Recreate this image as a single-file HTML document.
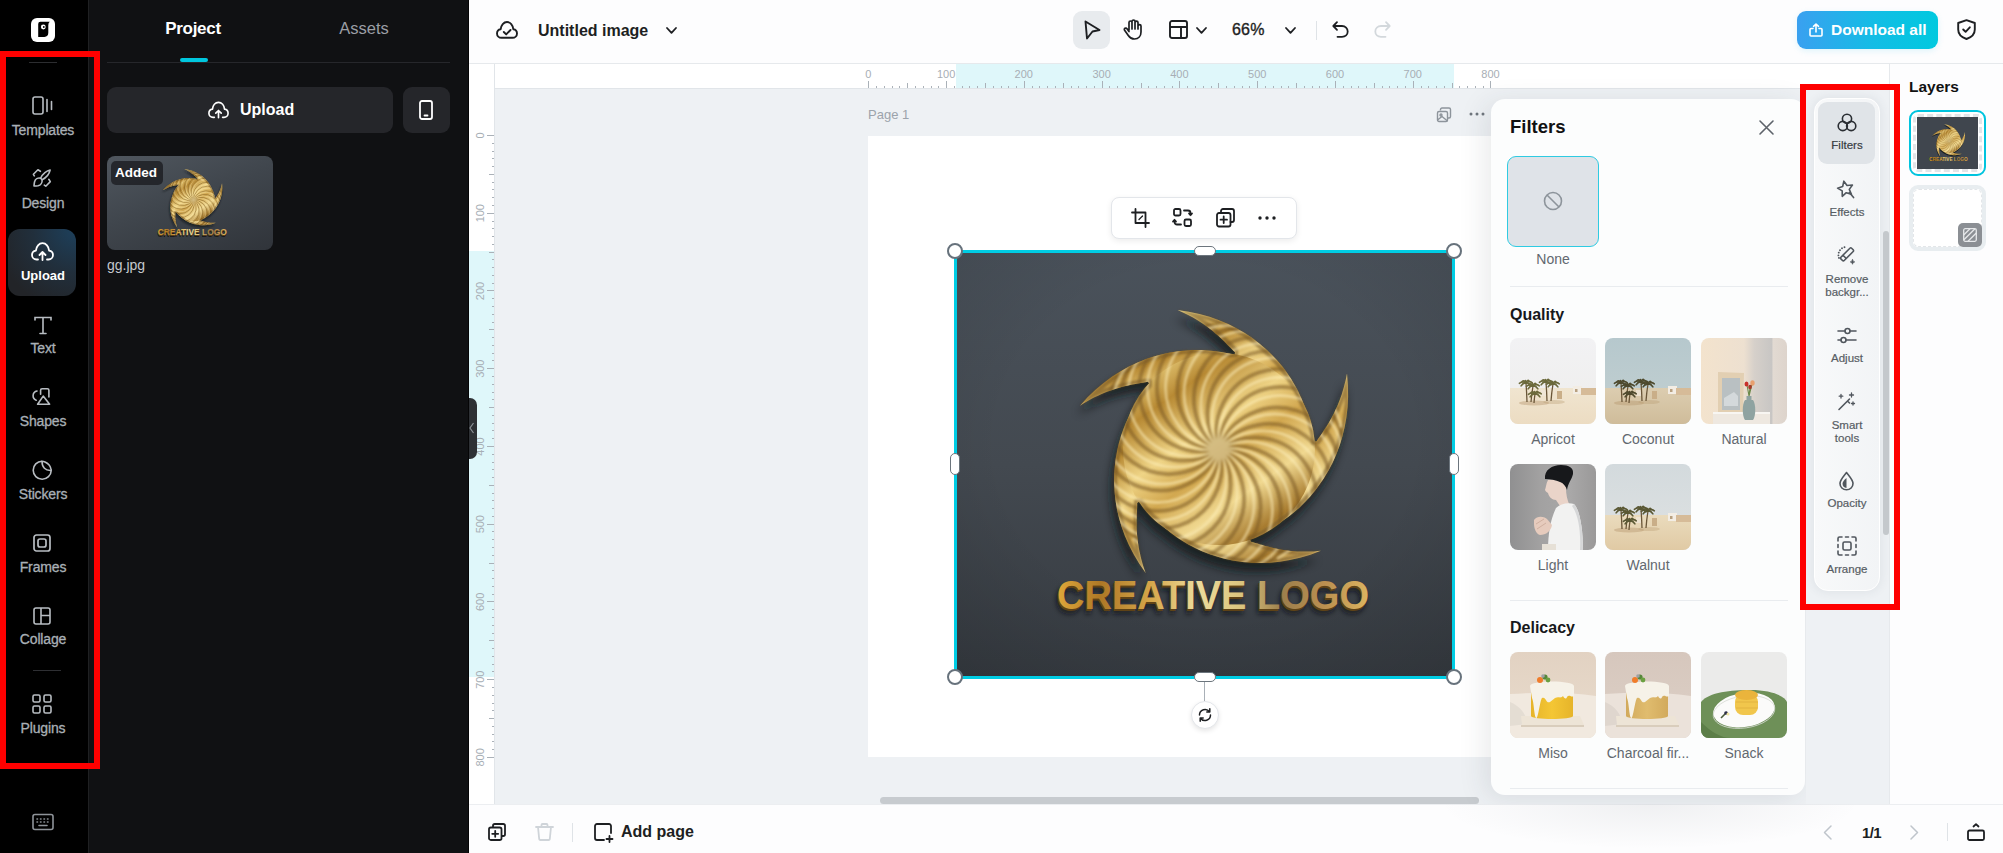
<!DOCTYPE html>
<html><head><meta charset="utf-8">
<style>
*{box-sizing:border-box;margin:0;padding:0}
html,body{width:2003px;height:853px;overflow:hidden;background:#fff;font-family:"Liberation Sans",sans-serif}
.a{position:absolute}
svg{display:block;overflow:visible}
.navl{position:absolute;left:0;width:86px;text-align:center;color:#a9b0b6;font-size:14px;letter-spacing:-0.15px;-webkit-text-stroke:0.3px #a9b0b6;white-space:nowrap}
.tl{position:absolute;text-align:center;white-space:nowrap}
.tile{position:absolute;width:86px;height:86px;border-radius:8px;overflow:hidden}
.tlab{position:absolute;width:96px;text-align:center;font-size:14px;color:#62686f;white-space:nowrap}
.tool{position:absolute;left:1814px;width:66px;text-align:center;font-size:11.5px;color:#575d64;line-height:12.5px;-webkit-text-stroke:0.2px #575d64}
</style></head><body>
<div class="a" style="left:0;top:0;width:2003px;height:853px;overflow:hidden">

<!-- ============ LEFT SIDEBAR ============ -->
<div class="a" style="left:0;top:0;width:88px;height:853px;background:#000"></div>
<div class="a" style="left:88px;top:0;width:1.5px;height:853px;background:#1f2022"></div>
<!-- logo -->
<div class="a" style="left:31px;top:18px;width:24px;height:24px;background:#fff;border-radius:6px"></div>
<svg class="a" style="left:31px;top:18px" width="24" height="24" viewBox="0 0 24 24">
 <path d="M7.2 6 Q7.2 3.8 9.4 3.8 H18.8 Q17.3 4.8 17.3 7.2 V14.8 Q17.3 18.9 13.4 18.9 H7.2 Z" fill="#000"/>
 <circle cx="12.3" cy="9" r="2.4" fill="#fff"/><circle cx="12.8" cy="9" r="0.9" fill="#000"/>
</svg>
<div class="a" style="left:29px;top:62px;width:28px;height:1px;background:#2c2d30"></div>

<!-- nav icons -->
<svg class="a" style="left:32px;top:96px" width="22" height="19" viewBox="0 0 22 19" fill="none" stroke="#b8bdc2" stroke-width="1.6">
 <rect x="1" y="1" width="10" height="17" rx="2"/><path d="M15 3.5v12M19.5 5.5v8" stroke-linecap="round"/>
</svg>
<div class="navl" style="top:122px">Templates</div>

<svg class="a" style="left:33px;top:169px" width="18" height="18" viewBox="0 0 18 18" fill="none" stroke="#b8bdc2" stroke-width="1.6" stroke-linecap="round" stroke-linejoin="round">
 <path d="M1.3 6.9 L0.4 5.3 L4.9 0.8 L7.4 2.3 M15.8 10.3 L17.3 12.6 L12.8 17.2 L11.3 16.1"/>
 <path d="M17.1 1 C14 1.5 9.5 4.5 7.6 9.2 L9.1 10.7 C13.5 8.5 16.5 4 17.1 1 Z"/>
 <path d="M7.6 9.2 C5 8.6 2.2 10 1.5 13 C1.2 14.8 1 16.2 1 17 C1.8 17 3.4 17 5 16.8 C7.8 16.3 9.4 13.6 9.1 10.7"/>
</svg>
<div class="navl" style="top:195px">Design</div>

<div class="a" style="left:8px;top:229px;width:68px;height:67px;border-radius:12px;background:radial-gradient(circle at 100% 0%,#1d405c 0%,#212f3c 45%,#222428 85%)"></div>
<svg class="a" style="left:31px;top:242px" width="23" height="19" viewBox="0 0 23 19" fill="none" stroke="#fff" stroke-width="1.8" stroke-linecap="round" stroke-linejoin="round">
 <path d="M7 17.5 H5.5 C3 17.5 1 15.5 1 13 C1 10.7 2.7 8.9 4.9 8.6 C5.3 4.5 8 1.2 11.5 1.2 C15 1.2 17.7 4.5 18.1 8.6 C20.3 8.9 22 10.7 22 13 C22 15.5 20 17.5 17.5 17.5 H16"/>
 <path d="M11.5 18 V10 M8.5 13 L11.5 10 L14.5 13"/>
</svg>
<div class="navl" style="top:268px;color:#fff;font-weight:bold;font-size:13px;-webkit-text-stroke:0;letter-spacing:0">Upload</div>

<svg class="a" style="left:33px;top:316px" width="20" height="19" viewBox="0 0 20 19" fill="none" stroke="#b8bdc2" stroke-width="1.6" stroke-linecap="round">
 <path d="M2 4 V1.5 H18 V4 M10 1.5 V17.5 M7 17.5 H13"/>
</svg>
<div class="navl" style="top:340px">Text</div>

<svg class="a" style="left:31px;top:387px" width="20" height="20" viewBox="0 0 20 20" fill="none" stroke="#b8bdc2" stroke-width="1.6" stroke-linecap="round" stroke-linejoin="round">
 <path d="M6 4 A4.8 4.8 0 0 0 5.2 13.2"/>
 <path d="M9.6 7.3 V3.2 Q9.6 1.7 11.1 1.7 H16.4 Q17.9 1.7 17.9 3.2 V10"/>
 <path d="M12.2 9.1 L6.6 17.3 H18.6 Z"/>
</svg>
<div class="navl" style="top:413px">Shapes</div>

<svg class="a" style="left:32px;top:460px" width="20" height="21" viewBox="0 0 20 21" fill="none" stroke="#b8bdc2" stroke-width="1.6" stroke-linejoin="round">
 <path d="M10 1.2 A9 9 0 1 0 19.2 10.4"/>
 <path d="M10 1.2 C11 1.3 12 1.6 13 2 C16 3.3 18.3 6 19 9 C19.2 9.5 19.2 10 19.2 10.4 C16.5 10.6 14 9.8 12.4 8.2 C10.8 6.6 10 4 10 1.2 Z"/>
</svg>
<div class="navl" style="top:486px">Stickers</div>

<svg class="a" style="left:33px;top:534px" width="18" height="18" viewBox="0 0 18 18" fill="none" stroke="#b8bdc2" stroke-width="1.7">
 <rect x="1" y="1" width="16" height="16" rx="2.5"/><rect x="5" y="5" width="8" height="8" rx="2"/>
</svg>
<div class="navl" style="top:559px">Frames</div>

<svg class="a" style="left:33px;top:607px" width="18" height="18" viewBox="0 0 18 18" fill="none" stroke="#b8bdc2" stroke-width="1.6">
 <rect x="1" y="1" width="16" height="16" rx="2"/><path d="M8 1 V17 M8 8.5 H17"/>
</svg>
<div class="navl" style="top:631px">Collage</div>
<div class="a" style="left:33px;top:670px;width:28px;height:1px;background:#2e2f33"></div>

<svg class="a" style="left:32px;top:694px" width="20" height="20" viewBox="0 0 20 20" fill="none" stroke="#b8bdc2" stroke-width="1.6">
 <rect x="1" y="1" width="7" height="7" rx="1.5"/><rect x="12" y="1" width="7" height="7" rx="1.5"/>
 <rect x="1" y="12" width="7" height="7" rx="1.5"/><rect x="12" y="12" width="7" height="7" rx="1.5"/>
</svg>
<div class="navl" style="top:720px">Plugins</div>

<svg class="a" style="left:32px;top:813px" width="22" height="18" viewBox="0 0 22 18" fill="none" stroke="#8e9399" stroke-width="1.6" stroke-linecap="round">
 <rect x="1" y="1.5" width="20" height="15" rx="2"/>
 <path d="M5 6h0.5M8.5 6h0.5M12 6h0.5M15.5 6h0.5M5 9h0.5M8.5 9h0.5M12 9h0.5M15.5 9h0.5M7 12.5h8"/>
</svg>


<!-- ============ LEFT PANEL ============ -->
<div class="a" style="left:89px;top:0;width:380px;height:853px;background:#101113"></div>
<div class="a" style="left:468px;top:0;width:1px;height:853px;background:#050506"></div>
<div class="tl" style="left:150px;top:19px;width:86px;color:#fff;font-size:17px;font-weight:bold;letter-spacing:-0.3px">Project</div>
<div class="tl" style="left:320px;top:19px;width:88px;color:#9b9fa5;font-size:16.5px">Assets</div>
<div class="a" style="left:107px;top:62px;width:343px;height:1px;background:#26272b"></div>
<div class="a" style="left:180px;top:58px;width:28px;height:4px;border-radius:2px;background:#00c7de"></div>

<div class="a" style="left:107px;top:87px;width:286px;height:46px;border-radius:9px;background:#25262a"></div>
<svg class="a" style="left:208px;top:101px" width="21" height="18" viewBox="0 0 23 19" fill="none" stroke="#fff" stroke-width="1.8" stroke-linecap="round" stroke-linejoin="round">
 <path d="M7 17.5 H5.5 C3 17.5 1 15.5 1 13 C1 10.7 2.7 8.9 4.9 8.6 C5.3 4.5 8 1.2 11.5 1.2 C15 1.2 17.7 4.5 18.1 8.6 C20.3 8.9 22 10.7 22 13 C22 15.5 20 17.5 17.5 17.5 H16"/>
 <path d="M11.5 18 V10 M8.5 13 L11.5 10 L14.5 13"/>
</svg>
<div class="tl" style="left:240px;top:101px;color:#fff;font-size:16px;font-weight:bold;text-align:left">Upload</div>
<div class="a" style="left:403px;top:87px;width:47px;height:46px;border-radius:9px;background:#25262a"></div>
<svg class="a" style="left:419px;top:100px" width="14" height="20" viewBox="0 0 14 20" fill="none" stroke="#fff" stroke-width="1.8">
 <rect x="1" y="1" width="12" height="18" rx="2"/><path d="M5.5 15.5 H8.5" stroke-linecap="round"/>
</svg>

<!-- thumb -->
<div class="a" style="left:107px;top:156px;width:166px;height:94px;border-radius:8px;overflow:hidden;background:linear-gradient(160deg,#50575f 0%,#40464d 45%,#30343a 100%)"><svg width="166" height="94" style="position:absolute;left:27.5px;top:0"><use href="#logo" width="111" height="94.6"/></svg></div>
<div class="a" style="left:111px;top:161px;width:52px;height:24px;border-radius:5px;background:rgba(30,32,36,0.85)"></div>
<div class="tl" style="left:115px;top:165px;color:#fff;font-size:13.5px;font-weight:bold;text-align:left">Added</div>
<div class="tl" style="left:107px;top:257px;color:#c5c9ce;font-size:14px;text-align:left">gg.jpg</div>

<!-- ============ TOP BAR ============ -->
<div class="a" style="left:469px;top:0;width:1534px;height:63px;background:#fdfdfe"></div>
<div class="a" style="left:469px;top:63px;width:1534px;height:1px;background:#e6e9ec"></div>
<svg class="a" style="left:496px;top:21px" width="22" height="18" viewBox="0 0 22 18" fill="none" stroke="#1d1f22" stroke-width="1.9" stroke-linecap="round" stroke-linejoin="round">
 <path d="M5.5 16.8 C3 16.8 1 14.9 1 12.5 C1 10.3 2.6 8.5 4.7 8.2 C5.1 4.2 7.7 1 11 1 C14.3 1 16.9 4.2 17.3 8.2 C19.4 8.5 21 10.3 21 12.5 C21 14.9 19 16.8 16.5 16.8 Z"/>
 <path d="M7.8 11 L10.2 13.4 L14.5 9"/>
</svg>
<div class="tl" style="left:538px;top:21.5px;color:#1d1f22;font-size:16px;font-weight:bold;text-align:left">Untitled image</div>
<svg class="a" style="left:666px;top:27px" width="11" height="7" viewBox="0 0 11 7" fill="none" stroke="#1d1f22" stroke-width="1.8" stroke-linecap="round" stroke-linejoin="round"><path d="M1 1 L5.5 5.8 L10 1"/></svg>

<!-- center tools -->
<div class="a" style="left:1073px;top:11px;width:37px;height:38px;border-radius:9px;background:#e8ebee"></div>
<svg class="a" style="left:1084px;top:20px" width="17" height="20" viewBox="0 0 17 20" fill="none" stroke="#1d1f22" stroke-width="1.9" stroke-linejoin="round">
 <path d="M1.5 1.5 L15.5 10 L8.5 11.5 L3 18.5 Z"/>
</svg>
<svg class="a" style="left:1123px;top:19px" width="19" height="21" viewBox="0 0 19 21" fill="none" stroke="#1d1f22" stroke-width="1.7" stroke-linecap="round" stroke-linejoin="round">
 <path d="M6 11 V3.5 C6 2.6 6.7 2 7.5 2 C8.3 2 9 2.6 9 3.5 V10 M9 9.5 V2.3 C9 1.5 9.7 1 10.5 1 C11.3 1 12 1.5 12 2.3 V10 M12 10 V3.5 C12 2.7 12.7 2.2 13.5 2.2 C14.3 2.2 15 2.7 15 3.5 V10 M15 7 C15 6.2 15.7 5.7 16.5 5.7 C17.3 5.7 18 6.2 18 7 V13 C18 17 15.5 20 11.5 20 C8.5 20 6.8 18.7 5.3 16.5 L1.6 11.3 C1.1 10.6 1.3 9.7 2 9.3 C2.7 8.9 3.6 9.1 4 9.8 L6 12.5"/>
</svg>
<svg class="a" style="left:1169px;top:20px" width="19" height="19" viewBox="0 0 19 19" fill="none" stroke="#1d1f22" stroke-width="1.9">
 <rect x="1" y="1" width="17" height="17" rx="2"/><path d="M1 7 H18 M12 7 V18"/>
</svg>
<svg class="a" style="left:1196px;top:27px" width="11" height="7" viewBox="0 0 11 7" fill="none" stroke="#1d1f22" stroke-width="1.8" stroke-linecap="round" stroke-linejoin="round"><path d="M1 1 L5.5 5.8 L10 1"/></svg>
<div class="tl" style="left:1232px;top:21px;color:#1d1f22;font-size:16px;text-align:left;letter-spacing:0.2px;-webkit-text-stroke:0.35px #1d1f22">66%</div>
<svg class="a" style="left:1285px;top:27px" width="11" height="7" viewBox="0 0 11 7" fill="none" stroke="#1d1f22" stroke-width="1.8" stroke-linecap="round" stroke-linejoin="round"><path d="M1 1 L5.5 5.8 L10 1"/></svg>
<div class="a" style="left:1316px;top:21px;width:1px;height:19px;background:#dfe3e7"></div>
<svg class="a" style="left:1332px;top:21px" width="17" height="17" viewBox="0 0 17 17" fill="none" stroke="#1d1f22" stroke-width="1.8" stroke-linecap="round" stroke-linejoin="round">
 <path d="M5 1.2 L1.3 5 L5 8.8 M1.5 5 H10 C13.3 5 15.7 7.4 15.7 10.5 C15.7 13.6 13.3 15.8 10 15.8 H5.5"/>
</svg>
<svg class="a" style="left:1374px;top:21px" width="17" height="17" viewBox="0 0 17 17" fill="none" stroke="#d3d8dc" stroke-width="1.8" stroke-linecap="round" stroke-linejoin="round">
 <path d="M12 1.2 L15.7 5 L12 8.8 M15.5 5 H7 C3.7 5 1.3 7.4 1.3 10.5 C1.3 13.6 3.7 15.8 7 15.8 H11.5"/>
</svg>

<!-- download -->
<div class="a" style="left:1797px;top:11px;width:141px;height:38px;border-radius:9px;background:linear-gradient(90deg,#3aa0f0 0%,#13bde5 55%,#00c9df 100%);box-shadow:0 2px 6px rgba(0,180,230,0.12)"></div>
<svg class="a" style="left:1809px;top:23px" width="14" height="14" viewBox="0 0 14 14" fill="none" stroke="#fff" stroke-width="1.6" stroke-linecap="round" stroke-linejoin="round">
 <path d="M4 5.5 H2 C1.4 5.5 1 5.9 1 6.5 V12 C1 12.6 1.4 13 2 13 H12 C12.6 13 13 12.6 13 12 V6.5 C13 5.9 12.6 5.5 12 5.5 H10 M7 9 V1 M4.5 3.3 L7 1 L9.5 3.3"/>
</svg>
<div class="tl" style="left:1831px;top:21px;color:#fff;font-size:15.5px;font-weight:bold;text-align:left">Download all</div>
<svg class="a" style="left:1957px;top:19px" width="19" height="21" viewBox="0 0 19 21" fill="none" stroke="#1d1f22" stroke-width="1.9" stroke-linejoin="round" stroke-linecap="round">
 <path d="M9.5 1.2 L17.8 4 V10.5 C17.8 15 14 18.5 9.5 20 C5 18.5 1.2 15 1.2 10.5 V4 Z"/>
 <path d="M6.2 10.5 L8.6 12.8 L12.8 8.3"/>
</svg>

<!-- ============ CANVAS AREA ============ -->
<div class="a" style="left:469px;top:64px;width:1421px;height:740px;background:#eef1f4"></div>
<!-- rulers -->
<div class="a" style="left:469px;top:64px;width:1421px;height:24px;background:#fff"></div>
<div class="a" style="left:956px;top:64px;width:498px;height:24px;background:#dff7fa"></div>
<div class="a" style="left:469px;top:88px;width:1421px;height:1px;background:#e1e5e9"></div>
<div class="a" style="left:469px;top:64px;width:26px;height:740px;background:#fff"></div>
<div class="a" style="left:469px;top:251px;width:26px;height:426px;background:#dff7fa"></div>
<div class="a" style="left:494px;top:64px;width:1px;height:740px;background:#e1e5e9"></div>
<svg class="a" style="left:0;top:0" width="2003" height="853">
<path d="M868.5 81V88 M876.5 86V88 M884.5 86V88 M892.5 86V88 M899.5 86V88 M907.5 83V88 M915.5 86V88 M923.5 86V88 M931.5 86V88 M938.5 86V88 M946.5 81V88 M954.5 86V88 M962.5 86V88 M969.5 86V88 M977.5 86V88 M985.5 83V88 M993.5 86V88 M1001.5 86V88 M1008.5 86V88 M1016.5 86V88 M1024.5 81V88 M1032.5 86V88 M1039.5 86V88 M1047.5 86V88 M1055.5 86V88 M1063.5 83V88 M1071.5 86V88 M1078.5 86V88 M1086.5 86V88 M1094.5 86V88 M1102.5 81V88 M1109.5 86V88 M1117.5 86V88 M1125.5 86V88 M1133.5 86V88 M1141.5 83V88 M1148.5 86V88 M1156.5 86V88 M1164.5 86V88 M1172.5 86V88 M1179.5 81V88 M1187.5 86V88 M1195.5 86V88 M1203.5 86V88 M1211.5 86V88 M1218.5 83V88 M1226.5 86V88 M1234.5 86V88 M1242.5 86V88 M1249.5 86V88 M1257.5 81V88 M1265.5 86V88 M1273.5 86V88 M1281.5 86V88 M1288.5 86V88 M1296.5 83V88 M1304.5 86V88 M1312.5 86V88 M1319.5 86V88 M1327.5 86V88 M1335.5 81V88 M1343.5 86V88 M1351.5 86V88 M1358.5 86V88 M1366.5 86V88 M1374.5 83V88 M1382.5 86V88 M1389.5 86V88 M1397.5 86V88 M1405.5 86V88 M1413.5 81V88 M1421.5 86V88 M1428.5 86V88 M1436.5 86V88 M1444.5 86V88 M1452.5 83V88 M1459.5 86V88 M1467.5 86V88 M1475.5 86V88 M1483.5 86V88 M1490.5 81V88 M487 135.5H494 M492 143.5H494 M492 151.5H494 M492 158.5H494 M492 166.5H494 M489 174.5H494 M492 182.5H494 M492 189.5H494 M492 197.5H494 M492 205.5H494 M487 213.5H494 M492 221.5H494 M492 228.5H494 M492 236.5H494 M492 244.5H494 M489 252.5H494 M492 259.5H494 M492 267.5H494 M492 275.5H494 M492 283.5H494 M487 290.5H494 M492 298.5H494 M492 306.5H494 M492 314.5H494 M492 322.5H494 M489 329.5H494 M492 337.5H494 M492 345.5H494 M492 353.5H494 M492 360.5H494 M487 368.5H494 M492 376.5H494 M492 384.5H494 M492 392.5H494 M492 399.5H494 M489 407.5H494 M492 415.5H494 M492 423.5H494 M492 430.5H494 M492 438.5H494 M487 446.5H494 M492 454.5H494 M492 462.5H494 M492 469.5H494 M492 477.5H494 M489 485.5H494 M492 493.5H494 M492 500.5H494 M492 508.5H494 M492 516.5H494 M487 524.5H494 M492 531.5H494 M492 539.5H494 M492 547.5H494 M492 555.5H494 M489 563.5H494 M492 570.5H494 M492 578.5H494 M492 586.5H494 M492 594.5H494 M487 601.5H494 M492 609.5H494 M492 617.5H494 M492 625.5H494 M492 633.5H494 M489 640.5H494 M492 648.5H494 M492 656.5H494 M492 664.5H494 M492 671.5H494 M487 679.5H494 M492 687.5H494 M492 695.5H494 M492 703.5H494 M492 710.5H494 M489 718.5H494 M492 726.5H494 M492 734.5H494 M492 741.5H494 M492 749.5H494 M487 757.5H494" stroke="#aab1b8" stroke-width="1" fill="none"/>
<g font-family="Liberation Sans" font-size="11" fill="#a7aeb5"><text x="868.3" y="77.5" text-anchor="middle">0</text><text x="946.1" y="77.5" text-anchor="middle">100</text><text x="1023.8" y="77.5" text-anchor="middle">200</text><text x="1101.6" y="77.5" text-anchor="middle">300</text><text x="1179.4" y="77.5" text-anchor="middle">400</text><text x="1257.2" y="77.5" text-anchor="middle">500</text><text x="1335.0" y="77.5" text-anchor="middle">600</text><text x="1412.7" y="77.5" text-anchor="middle">700</text><text x="1490.5" y="77.5" text-anchor="middle">800</text><text transform="translate(483.5 135.5) rotate(-90)" x="0" y="0" text-anchor="middle">0</text><text transform="translate(483.5 213.2) rotate(-90)" x="0" y="0" text-anchor="middle">100</text><text transform="translate(483.5 291.0) rotate(-90)" x="0" y="0" text-anchor="middle">200</text><text transform="translate(483.5 368.7) rotate(-90)" x="0" y="0" text-anchor="middle">300</text><text transform="translate(483.5 446.5) rotate(-90)" x="0" y="0" text-anchor="middle">400</text><text transform="translate(483.5 524.2) rotate(-90)" x="0" y="0" text-anchor="middle">500</text><text transform="translate(483.5 601.9) rotate(-90)" x="0" y="0" text-anchor="middle">600</text><text transform="translate(483.5 679.7) rotate(-90)" x="0" y="0" text-anchor="middle">700</text><text transform="translate(483.5 757.4) rotate(-90)" x="0" y="0" text-anchor="middle">800</text></g>
</svg>
<div class="a" style="left:469px;top:398px;width:8px;height:61px;border-radius:0 7px 7px 0;background:#2e3135"></div>
<svg class="a" style="left:469px;top:422px" width="6" height="12" viewBox="0 0 6 12" fill="none" stroke="#8c9196" stroke-width="1.2"><path d="M4.5 1 L1 6 L4.5 11"/></svg>

<!-- page -->
<div class="tl" style="left:868px;top:107px;color:#9ca3ab;font-size:13px;text-align:left">Page 1</div>
<svg class="a" style="left:1436px;top:107px" width="16" height="16" viewBox="0 0 16 16" fill="none" stroke="#8d949b" stroke-width="1.4" stroke-linejoin="round">
 <path d="M4.5 3.5 V2.5 C4.5 1.7 5.2 1 6 1 H13 C13.8 1 14.5 1.7 14.5 2.5 V9.5 C14.5 10.3 13.8 11 13 11 H12"/>
 <rect x="1.5" y="4.5" width="10" height="10" rx="1.5"/><circle cx="5" cy="8" r="1"/><path d="M1.5 13 L6 9.5 L11.5 14"/>
</svg>
<svg class="a" style="left:1469px;top:112px" width="16" height="4" viewBox="0 0 16 4" fill="#6f767d"><circle cx="2" cy="2" r="1.5"/><circle cx="8" cy="2" r="1.5"/><circle cx="14" cy="2" r="1.5"/></svg>
<div class="a" style="left:868px;top:136px;width:640px;height:621px;background:#fff"></div>

<!-- image -->
<svg class="a" style="left:0;top:0" width="0" height="0">
<defs>
<linearGradient id="bg" x1="0" y1="0" x2="0" y2="1"><stop offset="0" stop-color="#4a525b"/><stop offset="0.5" stop-color="#434950"/><stop offset="1" stop-color="#363b41"/></linearGradient>
<radialGradient id="vig" cx="0.5" cy="0.45" r="0.75"><stop offset="0.55" stop-color="#000" stop-opacity="0"/><stop offset="1" stop-color="#000" stop-opacity="0.12"/></radialGradient>
<linearGradient id="gold" x1="0.15" y1="0" x2="0.85" y2="1"><stop offset="0" stop-color="#f3dc8c"/><stop offset="0.2" stop-color="#b88a34"/><stop offset="0.4" stop-color="#efd486"/><stop offset="0.55" stop-color="#d2a850"/><stop offset="0.72" stop-color="#f0d890"/><stop offset="0.88" stop-color="#a87c30"/><stop offset="1" stop-color="#e3c274"/></linearGradient>
<linearGradient id="gold2" x1="0" y1="0" x2="1" y2="0"><stop offset="0" stop-color="#dfa83a"/><stop offset="0.14" stop-color="#ae7826"/><stop offset="0.3" stop-color="#d5a64a"/><stop offset="0.45" stop-color="#eddc9c"/><stop offset="0.6" stop-color="#d9c27c"/><stop offset="0.72" stop-color="#9c7e4c"/><stop offset="0.86" stop-color="#bb9050"/><stop offset="1" stop-color="#dcb460"/></linearGradient>
<filter id="sh" x="-20%" y="-20%" width="140%" height="140%"><feGaussianBlur stdDeviation="5"/></filter><filter id="sh2" x="-20%" y="-50%" width="140%" height="200%"><feGaussianBlur stdDeviation="2.5"/></filter>
<filter id="rim" x="-10%" y="-10%" width="120%" height="120%"><feMorphology in="SourceAlpha" operator="erode" radius="3" result="er"/><feComposite in="SourceAlpha" in2="er" operator="out" result="rm"/><feGaussianBlur in="rm" stdDeviation="0.8" result="rb"/><feFlood flood-color="#6e5020" flood-opacity="0.55"/><feComposite in2="rb" operator="in"/></filter>
<clipPath id="clipS"><path transform="translate(263 198)" d="M-41.4,-139.0 L-30.3,-137.3 L-19.6,-135.1 L-9.5,-132.2 L0.1,-128.8 L9.2,-124.9 L17.8,-120.6 L25.8,-115.9 L33.3,-110.9 L40.3,-105.6 L46.8,-100.0 L52.8,-94.3 L58.3,-88.4 L63.4,-82.4 L68.0,-76.2 L72.2,-69.9 L76.0,-63.6 L79.4,-57.2 L82.4,-50.7 L85.1,-44.2 L87.4,-37.6 L89.4,-31.0 L91.1,-24.3 L92.4,-17.6 L93.4,-10.8 L0,0 L16.0,-96.7 L14.4,-98.2 L12.7,-99.9 L11.0,-101.7 L9.2,-103.6 L7.3,-105.5 L5.4,-107.4 L3.5,-109.3 L1.4,-111.3 L-0.7,-113.2 L-2.9,-115.1 L-5.1,-117.0 L-7.5,-118.9 L-9.9,-120.8 L-12.4,-122.7 L-15.0,-124.5 L-17.6,-126.3 L-20.3,-128.0 L-23.1,-129.7 L-26.0,-131.4 L-28.9,-133.0 L-31.9,-134.6 L-35.0,-136.1 L-38.2,-137.6 L-41.4,-139.0Z"/><path transform="translate(263 198)" d="M128.0,-75.4 L128.9,-63.8 L129.1,-52.6 L128.6,-41.8 L127.4,-31.4 L125.6,-21.4 L123.2,-11.9 L120.4,-2.8 L117.1,5.8 L113.5,13.9 L109.5,21.6 L105.2,28.8 L100.6,35.6 L95.8,42.0 L90.8,47.9 L85.6,53.5 L80.3,58.7 L74.8,63.5 L69.2,68.0 L63.4,72.1 L57.6,75.9 L51.6,79.4 L45.5,82.6 L39.3,85.5 L32.9,88.0 L0,0 L97.7,-7.7 L98.8,-9.7 L100.2,-11.7 L101.7,-13.8 L103.2,-16.0 L104.7,-18.3 L106.3,-20.7 L107.8,-23.1 L109.3,-25.6 L110.8,-28.1 L112.3,-30.8 L113.8,-33.5 L115.2,-36.3 L116.5,-39.2 L117.9,-42.1 L119.1,-45.1 L120.4,-48.2 L121.6,-51.4 L122.7,-54.6 L123.7,-57.9 L124.7,-61.3 L125.6,-64.7 L126.5,-68.2 L127.3,-71.8 L128.0,-75.4Z"/><path transform="translate(263 198)" d="M101.8,101.8 L91.4,105.7 L81.0,108.8 L70.8,111.1 L60.8,112.7 L51.0,113.7 L41.5,114.0 L32.3,113.8 L23.3,113.0 L14.7,111.7 L6.4,109.9 L-1.6,107.8 L-9.2,105.3 L-16.5,102.4 L-23.5,99.2 L-30.2,95.7 L-36.5,92.0 L-42.6,88.0 L-48.4,83.8 L-53.8,79.3 L-59.0,74.6 L-63.9,69.8 L-68.6,64.7 L-72.9,59.4 L-77.0,53.9 L0,0 L31.9,92.7 L34.1,93.2 L36.3,93.9 L38.7,94.6 L41.1,95.4 L43.6,96.1 L46.2,96.9 L48.8,97.6 L51.5,98.3 L54.3,99.0 L57.1,99.6 L60.0,100.2 L62.9,100.7 L65.9,101.2 L68.9,101.6 L72.0,101.9 L75.2,102.2 L78.3,102.4 L81.6,102.6 L84.9,102.6 L88.2,102.6 L91.5,102.5 L94.9,102.4 L98.4,102.1 L101.8,101.8Z"/><path transform="translate(263 198)" d="M-73.3,123.9 L-79.7,114.8 L-85.2,105.5 L-90.0,96.2 L-94.1,86.9 L-97.4,77.7 L-100.1,68.5 L-102.2,59.5 L-103.6,50.7 L-104.5,42.0 L-104.9,33.5 L-104.8,25.3 L-104.2,17.3 L-103.3,9.5 L-101.9,1.9 L-100.2,-5.4 L-98.2,-12.5 L-95.8,-19.4 L-93.2,-26.0 L-90.2,-32.4 L-87.0,-38.6 L-83.5,-44.6 L-79.7,-50.3 L-75.7,-55.9 L-71.4,-61.2 L0,0 L-81.8,53.9 L-81.8,56.2 L-81.9,58.5 L-82.0,61.0 L-82.1,63.6 L-82.3,66.2 L-82.3,68.9 L-82.4,71.6 L-82.4,74.4 L-82.4,77.2 L-82.3,80.1 L-82.1,83.0 L-81.9,86.0 L-81.6,89.0 L-81.2,92.0 L-80.8,95.1 L-80.3,98.2 L-79.7,101.4 L-79.0,104.5 L-78.3,107.7 L-77.5,110.9 L-76.6,114.2 L-75.6,117.4 L-74.5,120.7 L-73.3,123.9Z"/><path transform="translate(263 198)" d="M-139.0,-43.3 L-131.4,-51.7 L-123.5,-59.3 L-115.4,-66.1 L-107.1,-72.2 L-98.8,-77.6 L-90.4,-82.2 L-82.0,-86.3 L-73.6,-89.7 L-65.3,-92.5 L-57.0,-94.8 L-48.9,-96.6 L-40.9,-97.8 L-33.1,-98.6 L-25.4,-99.0 L-17.8,-99.0 L-10.4,-98.6 L-3.2,-97.8 L3.9,-96.7 L10.8,-95.3 L17.6,-93.6 L24.2,-91.5 L30.6,-89.2 L37.0,-86.5 L43.1,-83.5 L0,0 L-71.3,-67.2 L-73.5,-66.7 L-75.9,-66.3 L-78.4,-65.9 L-80.9,-65.4 L-83.5,-65.0 L-86.2,-64.5 L-88.9,-63.9 L-91.7,-63.3 L-94.5,-62.7 L-97.4,-61.9 L-100.2,-61.1 L-103.1,-60.3 L-106.1,-59.3 L-109.0,-58.3 L-112.0,-57.2 L-115.0,-56.0 L-117.9,-54.7 L-121.0,-53.3 L-124.0,-51.9 L-127.0,-50.4 L-130.0,-48.7 L-133.0,-47.0 L-136.0,-45.2 L-139.0,-43.3Z"/><circle cx="263" cy="198" r="96"/></clipPath>

</defs><symbol id="logo" viewBox="0 0 498 426">
<g transform="translate(260 207)" fill="#111317" opacity="0.75" filter="url(#sh)"><path d="M-41.4,-139.0 L-30.3,-137.3 L-19.6,-135.1 L-9.5,-132.2 L0.1,-128.8 L9.2,-124.9 L17.8,-120.6 L25.8,-115.9 L33.3,-110.9 L40.3,-105.6 L46.8,-100.0 L52.8,-94.3 L58.3,-88.4 L63.4,-82.4 L68.0,-76.2 L72.2,-69.9 L76.0,-63.6 L79.4,-57.2 L82.4,-50.7 L85.1,-44.2 L87.4,-37.6 L89.4,-31.0 L91.1,-24.3 L92.4,-17.6 L93.4,-10.8 L0,0 L16.0,-96.7 L14.4,-98.2 L12.7,-99.9 L11.0,-101.7 L9.2,-103.6 L7.3,-105.5 L5.4,-107.4 L3.5,-109.3 L1.4,-111.3 L-0.7,-113.2 L-2.9,-115.1 L-5.1,-117.0 L-7.5,-118.9 L-9.9,-120.8 L-12.4,-122.7 L-15.0,-124.5 L-17.6,-126.3 L-20.3,-128.0 L-23.1,-129.7 L-26.0,-131.4 L-28.9,-133.0 L-31.9,-134.6 L-35.0,-136.1 L-38.2,-137.6 L-41.4,-139.0Z"/><path d="M128.0,-75.4 L128.9,-63.8 L129.1,-52.6 L128.6,-41.8 L127.4,-31.4 L125.6,-21.4 L123.2,-11.9 L120.4,-2.8 L117.1,5.8 L113.5,13.9 L109.5,21.6 L105.2,28.8 L100.6,35.6 L95.8,42.0 L90.8,47.9 L85.6,53.5 L80.3,58.7 L74.8,63.5 L69.2,68.0 L63.4,72.1 L57.6,75.9 L51.6,79.4 L45.5,82.6 L39.3,85.5 L32.9,88.0 L0,0 L97.7,-7.7 L98.8,-9.7 L100.2,-11.7 L101.7,-13.8 L103.2,-16.0 L104.7,-18.3 L106.3,-20.7 L107.8,-23.1 L109.3,-25.6 L110.8,-28.1 L112.3,-30.8 L113.8,-33.5 L115.2,-36.3 L116.5,-39.2 L117.9,-42.1 L119.1,-45.1 L120.4,-48.2 L121.6,-51.4 L122.7,-54.6 L123.7,-57.9 L124.7,-61.3 L125.6,-64.7 L126.5,-68.2 L127.3,-71.8 L128.0,-75.4Z"/><path d="M101.8,101.8 L91.4,105.7 L81.0,108.8 L70.8,111.1 L60.8,112.7 L51.0,113.7 L41.5,114.0 L32.3,113.8 L23.3,113.0 L14.7,111.7 L6.4,109.9 L-1.6,107.8 L-9.2,105.3 L-16.5,102.4 L-23.5,99.2 L-30.2,95.7 L-36.5,92.0 L-42.6,88.0 L-48.4,83.8 L-53.8,79.3 L-59.0,74.6 L-63.9,69.8 L-68.6,64.7 L-72.9,59.4 L-77.0,53.9 L0,0 L31.9,92.7 L34.1,93.2 L36.3,93.9 L38.7,94.6 L41.1,95.4 L43.6,96.1 L46.2,96.9 L48.8,97.6 L51.5,98.3 L54.3,99.0 L57.1,99.6 L60.0,100.2 L62.9,100.7 L65.9,101.2 L68.9,101.6 L72.0,101.9 L75.2,102.2 L78.3,102.4 L81.6,102.6 L84.9,102.6 L88.2,102.6 L91.5,102.5 L94.9,102.4 L98.4,102.1 L101.8,101.8Z"/><path d="M-73.3,123.9 L-79.7,114.8 L-85.2,105.5 L-90.0,96.2 L-94.1,86.9 L-97.4,77.7 L-100.1,68.5 L-102.2,59.5 L-103.6,50.7 L-104.5,42.0 L-104.9,33.5 L-104.8,25.3 L-104.2,17.3 L-103.3,9.5 L-101.9,1.9 L-100.2,-5.4 L-98.2,-12.5 L-95.8,-19.4 L-93.2,-26.0 L-90.2,-32.4 L-87.0,-38.6 L-83.5,-44.6 L-79.7,-50.3 L-75.7,-55.9 L-71.4,-61.2 L0,0 L-81.8,53.9 L-81.8,56.2 L-81.9,58.5 L-82.0,61.0 L-82.1,63.6 L-82.3,66.2 L-82.3,68.9 L-82.4,71.6 L-82.4,74.4 L-82.4,77.2 L-82.3,80.1 L-82.1,83.0 L-81.9,86.0 L-81.6,89.0 L-81.2,92.0 L-80.8,95.1 L-80.3,98.2 L-79.7,101.4 L-79.0,104.5 L-78.3,107.7 L-77.5,110.9 L-76.6,114.2 L-75.6,117.4 L-74.5,120.7 L-73.3,123.9Z"/><path d="M-139.0,-43.3 L-131.4,-51.7 L-123.5,-59.3 L-115.4,-66.1 L-107.1,-72.2 L-98.8,-77.6 L-90.4,-82.2 L-82.0,-86.3 L-73.6,-89.7 L-65.3,-92.5 L-57.0,-94.8 L-48.9,-96.6 L-40.9,-97.8 L-33.1,-98.6 L-25.4,-99.0 L-17.8,-99.0 L-10.4,-98.6 L-3.2,-97.8 L3.9,-96.7 L10.8,-95.3 L17.6,-93.6 L24.2,-91.5 L30.6,-89.2 L37.0,-86.5 L43.1,-83.5 L0,0 L-71.3,-67.2 L-73.5,-66.7 L-75.9,-66.3 L-78.4,-65.9 L-80.9,-65.4 L-83.5,-65.0 L-86.2,-64.5 L-88.9,-63.9 L-91.7,-63.3 L-94.5,-62.7 L-97.4,-61.9 L-100.2,-61.1 L-103.1,-60.3 L-106.1,-59.3 L-109.0,-58.3 L-112.0,-57.2 L-115.0,-56.0 L-117.9,-54.7 L-121.0,-53.3 L-124.0,-51.9 L-127.0,-50.4 L-130.0,-48.7 L-133.0,-47.0 L-136.0,-45.2 L-139.0,-43.3Z"/><circle r="96"/></g>
<g transform="translate(263 198)" fill="url(#gold)"><path d="M-41.4,-139.0 L-30.3,-137.3 L-19.6,-135.1 L-9.5,-132.2 L0.1,-128.8 L9.2,-124.9 L17.8,-120.6 L25.8,-115.9 L33.3,-110.9 L40.3,-105.6 L46.8,-100.0 L52.8,-94.3 L58.3,-88.4 L63.4,-82.4 L68.0,-76.2 L72.2,-69.9 L76.0,-63.6 L79.4,-57.2 L82.4,-50.7 L85.1,-44.2 L87.4,-37.6 L89.4,-31.0 L91.1,-24.3 L92.4,-17.6 L93.4,-10.8 L0,0 L16.0,-96.7 L14.4,-98.2 L12.7,-99.9 L11.0,-101.7 L9.2,-103.6 L7.3,-105.5 L5.4,-107.4 L3.5,-109.3 L1.4,-111.3 L-0.7,-113.2 L-2.9,-115.1 L-5.1,-117.0 L-7.5,-118.9 L-9.9,-120.8 L-12.4,-122.7 L-15.0,-124.5 L-17.6,-126.3 L-20.3,-128.0 L-23.1,-129.7 L-26.0,-131.4 L-28.9,-133.0 L-31.9,-134.6 L-35.0,-136.1 L-38.2,-137.6 L-41.4,-139.0Z"/><path d="M128.0,-75.4 L128.9,-63.8 L129.1,-52.6 L128.6,-41.8 L127.4,-31.4 L125.6,-21.4 L123.2,-11.9 L120.4,-2.8 L117.1,5.8 L113.5,13.9 L109.5,21.6 L105.2,28.8 L100.6,35.6 L95.8,42.0 L90.8,47.9 L85.6,53.5 L80.3,58.7 L74.8,63.5 L69.2,68.0 L63.4,72.1 L57.6,75.9 L51.6,79.4 L45.5,82.6 L39.3,85.5 L32.9,88.0 L0,0 L97.7,-7.7 L98.8,-9.7 L100.2,-11.7 L101.7,-13.8 L103.2,-16.0 L104.7,-18.3 L106.3,-20.7 L107.8,-23.1 L109.3,-25.6 L110.8,-28.1 L112.3,-30.8 L113.8,-33.5 L115.2,-36.3 L116.5,-39.2 L117.9,-42.1 L119.1,-45.1 L120.4,-48.2 L121.6,-51.4 L122.7,-54.6 L123.7,-57.9 L124.7,-61.3 L125.6,-64.7 L126.5,-68.2 L127.3,-71.8 L128.0,-75.4Z"/><path d="M101.8,101.8 L91.4,105.7 L81.0,108.8 L70.8,111.1 L60.8,112.7 L51.0,113.7 L41.5,114.0 L32.3,113.8 L23.3,113.0 L14.7,111.7 L6.4,109.9 L-1.6,107.8 L-9.2,105.3 L-16.5,102.4 L-23.5,99.2 L-30.2,95.7 L-36.5,92.0 L-42.6,88.0 L-48.4,83.8 L-53.8,79.3 L-59.0,74.6 L-63.9,69.8 L-68.6,64.7 L-72.9,59.4 L-77.0,53.9 L0,0 L31.9,92.7 L34.1,93.2 L36.3,93.9 L38.7,94.6 L41.1,95.4 L43.6,96.1 L46.2,96.9 L48.8,97.6 L51.5,98.3 L54.3,99.0 L57.1,99.6 L60.0,100.2 L62.9,100.7 L65.9,101.2 L68.9,101.6 L72.0,101.9 L75.2,102.2 L78.3,102.4 L81.6,102.6 L84.9,102.6 L88.2,102.6 L91.5,102.5 L94.9,102.4 L98.4,102.1 L101.8,101.8Z"/><path d="M-73.3,123.9 L-79.7,114.8 L-85.2,105.5 L-90.0,96.2 L-94.1,86.9 L-97.4,77.7 L-100.1,68.5 L-102.2,59.5 L-103.6,50.7 L-104.5,42.0 L-104.9,33.5 L-104.8,25.3 L-104.2,17.3 L-103.3,9.5 L-101.9,1.9 L-100.2,-5.4 L-98.2,-12.5 L-95.8,-19.4 L-93.2,-26.0 L-90.2,-32.4 L-87.0,-38.6 L-83.5,-44.6 L-79.7,-50.3 L-75.7,-55.9 L-71.4,-61.2 L0,0 L-81.8,53.9 L-81.8,56.2 L-81.9,58.5 L-82.0,61.0 L-82.1,63.6 L-82.3,66.2 L-82.3,68.9 L-82.4,71.6 L-82.4,74.4 L-82.4,77.2 L-82.3,80.1 L-82.1,83.0 L-81.9,86.0 L-81.6,89.0 L-81.2,92.0 L-80.8,95.1 L-80.3,98.2 L-79.7,101.4 L-79.0,104.5 L-78.3,107.7 L-77.5,110.9 L-76.6,114.2 L-75.6,117.4 L-74.5,120.7 L-73.3,123.9Z"/><path d="M-139.0,-43.3 L-131.4,-51.7 L-123.5,-59.3 L-115.4,-66.1 L-107.1,-72.2 L-98.8,-77.6 L-90.4,-82.2 L-82.0,-86.3 L-73.6,-89.7 L-65.3,-92.5 L-57.0,-94.8 L-48.9,-96.6 L-40.9,-97.8 L-33.1,-98.6 L-25.4,-99.0 L-17.8,-99.0 L-10.4,-98.6 L-3.2,-97.8 L3.9,-96.7 L10.8,-95.3 L17.6,-93.6 L24.2,-91.5 L30.6,-89.2 L37.0,-86.5 L43.1,-83.5 L0,0 L-71.3,-67.2 L-73.5,-66.7 L-75.9,-66.3 L-78.4,-65.9 L-80.9,-65.4 L-83.5,-65.0 L-86.2,-64.5 L-88.9,-63.9 L-91.7,-63.3 L-94.5,-62.7 L-97.4,-61.9 L-100.2,-61.1 L-103.1,-60.3 L-106.1,-59.3 L-109.0,-58.3 L-112.0,-57.2 L-115.0,-56.0 L-117.9,-54.7 L-121.0,-53.3 L-124.0,-51.9 L-127.0,-50.4 L-130.0,-48.7 L-133.0,-47.0 L-136.0,-45.2 L-139.0,-43.3Z"/><circle r="96"/></g>
<g filter="url(#rim)"><g transform="translate(263 198)" fill="#000"><path d="M-41.4,-139.0 L-30.3,-137.3 L-19.6,-135.1 L-9.5,-132.2 L0.1,-128.8 L9.2,-124.9 L17.8,-120.6 L25.8,-115.9 L33.3,-110.9 L40.3,-105.6 L46.8,-100.0 L52.8,-94.3 L58.3,-88.4 L63.4,-82.4 L68.0,-76.2 L72.2,-69.9 L76.0,-63.6 L79.4,-57.2 L82.4,-50.7 L85.1,-44.2 L87.4,-37.6 L89.4,-31.0 L91.1,-24.3 L92.4,-17.6 L93.4,-10.8 L0,0 L16.0,-96.7 L14.4,-98.2 L12.7,-99.9 L11.0,-101.7 L9.2,-103.6 L7.3,-105.5 L5.4,-107.4 L3.5,-109.3 L1.4,-111.3 L-0.7,-113.2 L-2.9,-115.1 L-5.1,-117.0 L-7.5,-118.9 L-9.9,-120.8 L-12.4,-122.7 L-15.0,-124.5 L-17.6,-126.3 L-20.3,-128.0 L-23.1,-129.7 L-26.0,-131.4 L-28.9,-133.0 L-31.9,-134.6 L-35.0,-136.1 L-38.2,-137.6 L-41.4,-139.0Z"/><path d="M128.0,-75.4 L128.9,-63.8 L129.1,-52.6 L128.6,-41.8 L127.4,-31.4 L125.6,-21.4 L123.2,-11.9 L120.4,-2.8 L117.1,5.8 L113.5,13.9 L109.5,21.6 L105.2,28.8 L100.6,35.6 L95.8,42.0 L90.8,47.9 L85.6,53.5 L80.3,58.7 L74.8,63.5 L69.2,68.0 L63.4,72.1 L57.6,75.9 L51.6,79.4 L45.5,82.6 L39.3,85.5 L32.9,88.0 L0,0 L97.7,-7.7 L98.8,-9.7 L100.2,-11.7 L101.7,-13.8 L103.2,-16.0 L104.7,-18.3 L106.3,-20.7 L107.8,-23.1 L109.3,-25.6 L110.8,-28.1 L112.3,-30.8 L113.8,-33.5 L115.2,-36.3 L116.5,-39.2 L117.9,-42.1 L119.1,-45.1 L120.4,-48.2 L121.6,-51.4 L122.7,-54.6 L123.7,-57.9 L124.7,-61.3 L125.6,-64.7 L126.5,-68.2 L127.3,-71.8 L128.0,-75.4Z"/><path d="M101.8,101.8 L91.4,105.7 L81.0,108.8 L70.8,111.1 L60.8,112.7 L51.0,113.7 L41.5,114.0 L32.3,113.8 L23.3,113.0 L14.7,111.7 L6.4,109.9 L-1.6,107.8 L-9.2,105.3 L-16.5,102.4 L-23.5,99.2 L-30.2,95.7 L-36.5,92.0 L-42.6,88.0 L-48.4,83.8 L-53.8,79.3 L-59.0,74.6 L-63.9,69.8 L-68.6,64.7 L-72.9,59.4 L-77.0,53.9 L0,0 L31.9,92.7 L34.1,93.2 L36.3,93.9 L38.7,94.6 L41.1,95.4 L43.6,96.1 L46.2,96.9 L48.8,97.6 L51.5,98.3 L54.3,99.0 L57.1,99.6 L60.0,100.2 L62.9,100.7 L65.9,101.2 L68.9,101.6 L72.0,101.9 L75.2,102.2 L78.3,102.4 L81.6,102.6 L84.9,102.6 L88.2,102.6 L91.5,102.5 L94.9,102.4 L98.4,102.1 L101.8,101.8Z"/><path d="M-73.3,123.9 L-79.7,114.8 L-85.2,105.5 L-90.0,96.2 L-94.1,86.9 L-97.4,77.7 L-100.1,68.5 L-102.2,59.5 L-103.6,50.7 L-104.5,42.0 L-104.9,33.5 L-104.8,25.3 L-104.2,17.3 L-103.3,9.5 L-101.9,1.9 L-100.2,-5.4 L-98.2,-12.5 L-95.8,-19.4 L-93.2,-26.0 L-90.2,-32.4 L-87.0,-38.6 L-83.5,-44.6 L-79.7,-50.3 L-75.7,-55.9 L-71.4,-61.2 L0,0 L-81.8,53.9 L-81.8,56.2 L-81.9,58.5 L-82.0,61.0 L-82.1,63.6 L-82.3,66.2 L-82.3,68.9 L-82.4,71.6 L-82.4,74.4 L-82.4,77.2 L-82.3,80.1 L-82.1,83.0 L-81.9,86.0 L-81.6,89.0 L-81.2,92.0 L-80.8,95.1 L-80.3,98.2 L-79.7,101.4 L-79.0,104.5 L-78.3,107.7 L-77.5,110.9 L-76.6,114.2 L-75.6,117.4 L-74.5,120.7 L-73.3,123.9Z"/><path d="M-139.0,-43.3 L-131.4,-51.7 L-123.5,-59.3 L-115.4,-66.1 L-107.1,-72.2 L-98.8,-77.6 L-90.4,-82.2 L-82.0,-86.3 L-73.6,-89.7 L-65.3,-92.5 L-57.0,-94.8 L-48.9,-96.6 L-40.9,-97.8 L-33.1,-98.6 L-25.4,-99.0 L-17.8,-99.0 L-10.4,-98.6 L-3.2,-97.8 L3.9,-96.7 L10.8,-95.3 L17.6,-93.6 L24.2,-91.5 L30.6,-89.2 L37.0,-86.5 L43.1,-83.5 L0,0 L-71.3,-67.2 L-73.5,-66.7 L-75.9,-66.3 L-78.4,-65.9 L-80.9,-65.4 L-83.5,-65.0 L-86.2,-64.5 L-88.9,-63.9 L-91.7,-63.3 L-94.5,-62.7 L-97.4,-61.9 L-100.2,-61.1 L-103.1,-60.3 L-106.1,-59.3 L-109.0,-58.3 L-112.0,-57.2 L-115.0,-56.0 L-117.9,-54.7 L-121.0,-53.3 L-124.0,-51.9 L-127.0,-50.4 L-130.0,-48.7 L-133.0,-47.0 L-136.0,-45.2 L-139.0,-43.3Z"/><circle r="96"/></g></g>
<filter id="bl1" x="-10%" y="-10%" width="120%" height="120%"><feGaussianBlur stdDeviation="1.3"/></filter>
<g clip-path="url(#clipS)"><g transform="translate(263 198)" fill="none"><path d="M0,0 A62 62 0 0 1 124.0,0.0 M0,0 A62 62 0 0 1 117.9,38.3 M0,0 A62 62 0 0 1 100.3,72.9 M0,0 A62 62 0 0 1 72.9,100.3 M0,0 A62 62 0 0 1 38.3,117.9 M0,0 A62 62 0 0 1 0.0,124.0 M0,0 A62 62 0 0 1 -38.3,117.9 M0,0 A62 62 0 0 1 -72.9,100.3 M0,0 A62 62 0 0 1 -100.3,72.9 M0,0 A62 62 0 0 1 -117.9,38.3 M0,0 A62 62 0 0 1 -124.0,0.0 M0,0 A62 62 0 0 1 -117.9,-38.3 M0,0 A62 62 0 0 1 -100.3,-72.9 M0,0 A62 62 0 0 1 -72.9,-100.3 M0,0 A62 62 0 0 1 -38.3,-117.9 M0,0 A62 62 0 0 1 -0.0,-124.0 M0,0 A62 62 0 0 1 38.3,-117.9 M0,0 A62 62 0 0 1 72.9,-100.3 M0,0 A62 62 0 0 1 100.3,-72.9 M0,0 A62 62 0 0 1 117.9,-38.3" stroke="#7a5820" stroke-width="4" opacity="0.55" filter="url(#bl1)"/><path d="M0,0 A62 62 0 0 1 122.8,17.3 M0,0 A62 62 0 0 1 111.5,54.4 M0,0 A62 62 0 0 1 89.2,86.1 M0,0 A62 62 0 0 1 58.2,109.5 M0,0 A62 62 0 0 1 21.5,122.1 M0,0 A62 62 0 0 1 -17.3,122.8 M0,0 A62 62 0 0 1 -54.4,111.5 M0,0 A62 62 0 0 1 -86.1,89.2 M0,0 A62 62 0 0 1 -109.5,58.2 M0,0 A62 62 0 0 1 -122.1,21.5 M0,0 A62 62 0 0 1 -122.8,-17.3 M0,0 A62 62 0 0 1 -111.5,-54.4 M0,0 A62 62 0 0 1 -89.2,-86.1 M0,0 A62 62 0 0 1 -58.2,-109.5 M0,0 A62 62 0 0 1 -21.5,-122.1 M0,0 A62 62 0 0 1 17.3,-122.8 M0,0 A62 62 0 0 1 54.4,-111.5 M0,0 A62 62 0 0 1 86.1,-89.2 M0,0 A62 62 0 0 1 109.5,-58.2 M0,0 A62 62 0 0 1 122.1,-21.5" stroke="#fff2bf" stroke-width="3" opacity="0.5" filter="url(#bl1)"/></g></g>
<text x="255" y="363" font-family="Liberation Sans" font-weight="bold" font-size="41" fill="#0e1013" opacity="0.75" text-anchor="middle" textLength="312" lengthAdjust="spacingAndGlyphs" filter="url(#sh2)">CREATIVE LOGO</text>
<text x="256" y="359.5" font-family="Liberation Sans" font-weight="bold" font-size="41" fill="#5e4216" text-anchor="middle" textLength="312" lengthAdjust="spacingAndGlyphs">CREATIVE LOGO</text>
<text x="257" y="358" font-family="Liberation Sans" font-weight="bold" font-size="41" fill="url(#gold2)" text-anchor="middle" textLength="312" lengthAdjust="spacingAndGlyphs">CREATIVE LOGO</text>
</symbol></svg>
<svg class="a" style="left:956px;top:251px" width="498" height="426"><rect width="498" height="426" fill="url(#bg)"/><rect width="498" height="426" fill="url(#vig)"/><use href="#logo" width="498" height="426"/></svg>
<div class="a" style="left:954px;top:249.5px;width:501px;height:429px;border:3px solid #00cde4"></div>

<!-- toolbar -->
<div class="a" style="left:1111px;top:197px;width:186px;height:42px;border-radius:8px;background:#fff;border:1px solid #e3e6ea;box-shadow:0 2px 6px rgba(0,0,0,0.08)"></div>
<svg class="a" style="left:1131px;top:208px" width="19" height="20" viewBox="0 0 19 20" fill="none" stroke="#1d1f22" stroke-width="1.8" stroke-linecap="round" stroke-linejoin="round">
 <path d="M4.5 1 V15 H18 M1 4.5 H14.5 V19"/><path d="M8 11.5 L11.5 8" stroke-width="1.3"/>
</svg>
<svg class="a" style="left:1173px;top:208px" width="19" height="19" viewBox="0 0 19 19" fill="none" stroke="#1d1f22" stroke-width="1.8" stroke-linecap="round" stroke-linejoin="round">
 <rect x="1" y="1" width="6.5" height="6.5" rx="1.5"/><rect x="11.5" y="11.5" width="6.5" height="6.5" rx="1.5"/>
 <path d="M11 2.5 H15 C16.4 2.5 17.5 3.6 17.5 5 V7 M16 5.5 L17.5 7.2 L19 5.5 M8 16.5 H4 C2.6 16.5 1.5 15.4 1.5 14 V12 M3 13.5 L1.5 11.8 L0 13.5"/>
</svg>
<svg class="a" style="left:1216px;top:208px" width="19" height="19" viewBox="0 0 19 19" fill="none" stroke="#1d1f22" stroke-width="1.8" stroke-linecap="round" stroke-linejoin="round">
 <path d="M5 4.5 V3 C5 1.9 5.9 1 7 1 H16 C17.1 1 18 1.9 18 3 V12 C18 13.1 17.1 14 16 14 H14.5"/>
 <rect x="1" y="5" width="13.5" height="13.5" rx="2"/><path d="M7.7 8.5 V15 M4.5 11.7 H11"/>
</svg>
<svg class="a" style="left:1258px;top:216px" width="18" height="4" viewBox="0 0 18 4" fill="#1d1f22"><circle cx="2" cy="2" r="1.7"/><circle cx="9" cy="2" r="1.7"/><circle cx="16" cy="2" r="1.7"/></svg>

<!-- handles -->
<div class="a" style="left:947px;top:243px;width:16px;height:16px;border-radius:50%;background:#fff;border:2px solid #67727c"></div>
<div class="a" style="left:1446px;top:243px;width:16px;height:16px;border-radius:50%;background:#fff;border:2px solid #67727c"></div>
<div class="a" style="left:947px;top:669px;width:16px;height:16px;border-radius:50%;background:#fff;border:2px solid #67727c"></div>
<div class="a" style="left:1446px;top:669px;width:16px;height:16px;border-radius:50%;background:#fff;border:2px solid #67727c"></div>
<div class="a" style="left:1194px;top:246px;width:22px;height:10px;border-radius:5px;background:#fff;border:1.5px solid #6c757d"></div>
<div class="a" style="left:1194px;top:672px;width:22px;height:10px;border-radius:5px;background:#fff;border:1.5px solid #6c757d"></div>
<div class="a" style="left:950px;top:453px;width:10px;height:22px;border-radius:5px;background:#fff;border:1.5px solid #6c757d"></div>
<div class="a" style="left:1449px;top:453px;width:10px;height:22px;border-radius:5px;background:#fff;border:1.5px solid #6c757d"></div>
<div class="a" style="left:1204px;top:682px;width:1px;height:19px;background:#a9b0b7"></div>
<div class="a" style="left:1191px;top:701px;width:28px;height:28px;border-radius:50%;background:#fff;border:1px solid #e3e6ea;box-shadow:0 2px 5px rgba(0,0,0,0.1)"></div>
<svg class="a" style="left:1197px;top:707px" width="16" height="16" viewBox="0 0 16 16" fill="none" stroke="#1d1f22" stroke-width="1.5" stroke-linecap="round" stroke-linejoin="round">
 <path d="M2.5 8 A5.5 5.5 0 0 1 12.5 4.8 M13.5 8 A5.5 5.5 0 0 1 3.5 11.2 M12.8 1.8 V5 H9.8 M3.2 14.2 V11 H6.2"/>
</svg>

<!-- scrollbar -->
<div class="a" style="left:880px;top:797px;width:599px;height:7px;border-radius:4px;background:#c7cbcf"></div>

<!-- ============ FILTERS PANEL ============ -->
<div class="a" style="left:1491px;top:99px;width:314px;height:696px;border-radius:14px;background:#fcfdfd;box-shadow:-6px 4px 28px rgba(40,50,60,0.10)"></div>
<div class="tl" style="left:1510px;top:116px;color:#111;font-size:18.5px;font-weight:bold;text-align:left">Filters</div>
<svg class="a" style="left:1759px;top:120px" width="15" height="15" viewBox="0 0 15 15" fill="none" stroke="#5d636a" stroke-width="1.6" stroke-linecap="round"><path d="M1 1 L14 14 M14 1 L1 14"/></svg>

<div class="a" style="left:1507px;top:156px;width:92px;height:91px;border-radius:9px;border:1.5px solid #2fcbe2;background:#dfe3e8"></div>
<svg class="a" style="left:1543px;top:191px" width="20" height="20" viewBox="0 0 20 20" fill="none" stroke="#8d949b" stroke-width="1.6"><circle cx="10" cy="10" r="8.5"/><path d="M4 4 L16 16"/></svg>
<div class="tlab" style="left:1505px;top:251px">None</div>
<div class="a" style="left:1510px;top:286px;width:278px;height:1px;background:#e9ecef"></div>

<div class="tl" style="left:1510px;top:306px;color:#16181b;font-size:16px;font-weight:bold;text-align:left">Quality</div>
<div class="tile" style="left:1510px;top:338px"><svg width="86" height="86" viewBox="0 0 86 86">
<defs><linearGradient id="sky1" x1="0" y1="0" x2="0" y2="1"><stop offset="0" stop-color="#f2f2f4"/><stop offset="1" stop-color="#eeedeb"/></linearGradient>
<linearGradient id="sand1" x1="0" y1="0" x2="0" y2="1"><stop offset="0" stop-color="#f0e5d0"/><stop offset="1" stop-color="#ecdcc2"/></linearGradient></defs>
<rect width="86" height="86" fill="url(#sky1)"/>
<rect y="50" width="86" height="36" fill="url(#sand1)"/>
<ellipse cx="24" cy="65" rx="15" ry="2.5" fill="#b89a70" opacity="0.45"/><ellipse cx="44" cy="64" rx="11" ry="2" fill="#b89a70" opacity="0.35"/>
<rect x="63" y="48" width="9" height="8" fill="#f3ede4"/><rect x="71" y="50" width="15" height="7" fill="#d6bb98"/><rect x="65" y="51" width="2.5" height="3" fill="#b8a080"/>
<rect x="31" y="52" width="6" height="6" fill="#efe6d8" opacity="0.8"/><rect x="47" y="53" width="5" height="8" fill="#c9ae88"/>
<path d="M17 64 Q16.7 54.5 16.0 45.0" stroke="#6a5638" stroke-width="1.3" fill="none"/><path d="M16.0 45.0 Q12.7 42.6 9.4 45.3" stroke="#6c6a3c" stroke-width="1.6" fill="none" stroke-linecap="round"/><path d="M16.0 45.0 Q14.1 41.5 12.1 43.5" stroke="#6c6a3c" stroke-width="1.6" fill="none" stroke-linecap="round"/><path d="M16.0 45.0 Q15.6 41.3 15.1 43.3" stroke="#6c6a3c" stroke-width="1.6" fill="none" stroke-linecap="round"/><path d="M16.0 45.0 Q17.5 41.2 19.0 43.0" stroke="#6c6a3c" stroke-width="1.6" fill="none" stroke-linecap="round"/><path d="M16.0 45.0 Q19.2 42.3 22.3 44.8" stroke="#6c6a3c" stroke-width="1.6" fill="none" stroke-linecap="round"/><path d="M16.0 45.0 Q18.5 44.2 20.9 47.9" stroke="#6c6a3c" stroke-width="1.6" fill="none" stroke-linecap="round"/><path d="M16.0 45.0 Q13.5 44.2 11.1 47.9" stroke="#6c6a3c" stroke-width="1.6" fill="none" stroke-linecap="round"/><path d="M21 64 Q21.6 56.0 23.0 48.0" stroke="#6a5638" stroke-width="1.3" fill="none"/><path d="M23.0 48.0 Q19.7 45.6 16.4 48.3" stroke="#6c6a3c" stroke-width="1.6" fill="none" stroke-linecap="round"/><path d="M23.0 48.0 Q21.1 44.5 19.1 46.5" stroke="#6c6a3c" stroke-width="1.6" fill="none" stroke-linecap="round"/><path d="M23.0 48.0 Q22.6 44.3 22.1 46.3" stroke="#6c6a3c" stroke-width="1.6" fill="none" stroke-linecap="round"/><path d="M23.0 48.0 Q24.5 44.2 26.0 46.0" stroke="#6c6a3c" stroke-width="1.6" fill="none" stroke-linecap="round"/><path d="M23.0 48.0 Q26.2 45.3 29.3 47.8" stroke="#6c6a3c" stroke-width="1.6" fill="none" stroke-linecap="round"/><path d="M23.0 48.0 Q25.5 47.2 27.9 50.9" stroke="#6c6a3c" stroke-width="1.6" fill="none" stroke-linecap="round"/><path d="M23.0 48.0 Q20.5 47.2 18.1 50.9" stroke="#6c6a3c" stroke-width="1.6" fill="none" stroke-linecap="round"/><path d="M24 65 Q24.3 60.5 25.0 56.0" stroke="#6a5638" stroke-width="1.3" fill="none"/><path d="M25.0 56.0 Q21.7 53.6 18.4 56.3" stroke="#6c6a3c" stroke-width="1.6" fill="none" stroke-linecap="round"/><path d="M25.0 56.0 Q23.1 52.5 21.1 54.5" stroke="#6c6a3c" stroke-width="1.6" fill="none" stroke-linecap="round"/><path d="M25.0 56.0 Q24.6 52.3 24.1 54.3" stroke="#6c6a3c" stroke-width="1.6" fill="none" stroke-linecap="round"/><path d="M25.0 56.0 Q26.5 52.2 28.0 54.0" stroke="#6c6a3c" stroke-width="1.6" fill="none" stroke-linecap="round"/><path d="M25.0 56.0 Q28.2 53.3 31.3 55.8" stroke="#6c6a3c" stroke-width="1.6" fill="none" stroke-linecap="round"/><path d="M25.0 56.0 Q27.5 55.2 29.9 58.9" stroke="#6c6a3c" stroke-width="1.6" fill="none" stroke-linecap="round"/><path d="M25.0 56.0 Q22.5 55.2 20.1 58.9" stroke="#6c6a3c" stroke-width="1.6" fill="none" stroke-linecap="round"/>
<path d="M37 63 Q36.7 53.5 36.0 44.0" stroke="#6a5638" stroke-width="1.3" fill="none"/><path d="M36.0 44.0 Q32.7 41.6 29.4 44.3" stroke="#6c6a3c" stroke-width="1.6" fill="none" stroke-linecap="round"/><path d="M36.0 44.0 Q34.1 40.5 32.1 42.5" stroke="#6c6a3c" stroke-width="1.6" fill="none" stroke-linecap="round"/><path d="M36.0 44.0 Q35.6 40.3 35.1 42.3" stroke="#6c6a3c" stroke-width="1.6" fill="none" stroke-linecap="round"/><path d="M36.0 44.0 Q37.5 40.2 39.0 42.0" stroke="#6c6a3c" stroke-width="1.6" fill="none" stroke-linecap="round"/><path d="M36.0 44.0 Q39.2 41.3 42.3 43.8" stroke="#6c6a3c" stroke-width="1.6" fill="none" stroke-linecap="round"/><path d="M36.0 44.0 Q38.5 43.2 40.9 46.9" stroke="#6c6a3c" stroke-width="1.6" fill="none" stroke-linecap="round"/><path d="M36.0 44.0 Q33.5 43.2 31.1 46.9" stroke="#6c6a3c" stroke-width="1.6" fill="none" stroke-linecap="round"/><path d="M41 63 Q41.6 54.5 43.0 46.0" stroke="#6a5638" stroke-width="1.3" fill="none"/><path d="M43.0 46.0 Q39.7 43.6 36.4 46.3" stroke="#6c6a3c" stroke-width="1.6" fill="none" stroke-linecap="round"/><path d="M43.0 46.0 Q41.1 42.5 39.1 44.5" stroke="#6c6a3c" stroke-width="1.6" fill="none" stroke-linecap="round"/><path d="M43.0 46.0 Q42.6 42.3 42.1 44.3" stroke="#6c6a3c" stroke-width="1.6" fill="none" stroke-linecap="round"/><path d="M43.0 46.0 Q44.5 42.2 46.0 44.0" stroke="#6c6a3c" stroke-width="1.6" fill="none" stroke-linecap="round"/><path d="M43.0 46.0 Q46.2 43.3 49.3 45.8" stroke="#6c6a3c" stroke-width="1.6" fill="none" stroke-linecap="round"/><path d="M43.0 46.0 Q45.5 45.2 47.9 48.9" stroke="#6c6a3c" stroke-width="1.6" fill="none" stroke-linecap="round"/><path d="M43.0 46.0 Q40.5 45.2 38.1 48.9" stroke="#6c6a3c" stroke-width="1.6" fill="none" stroke-linecap="round"/>
</svg></div>
<div class="tile" style="left:1605px;top:338px"><svg width="86" height="86" viewBox="0 0 86 86">
<defs><linearGradient id="sky2" x1="0" y1="0" x2="0" y2="1"><stop offset="0" stop-color="#b6c8cd"/><stop offset="1" stop-color="#c3d0d1"/></linearGradient>
<linearGradient id="sand2" x1="0" y1="0" x2="0" y2="1"><stop offset="0" stop-color="#dccdb0"/><stop offset="1" stop-color="#cfbc9a"/></linearGradient></defs>
<rect width="86" height="86" fill="url(#sky2)"/>
<rect y="50" width="86" height="36" fill="url(#sand2)"/>
<ellipse cx="24" cy="65" rx="15" ry="2.5" fill="#b89a70" opacity="0.45"/><ellipse cx="44" cy="64" rx="11" ry="2" fill="#b89a70" opacity="0.35"/>
<rect x="63" y="48" width="9" height="8" fill="#f3ede4"/><rect x="71" y="50" width="15" height="7" fill="#d6bb98"/><rect x="65" y="51" width="2.5" height="3" fill="#b8a080"/>
<rect x="31" y="52" width="6" height="6" fill="#efe6d8" opacity="0.8"/><rect x="47" y="53" width="5" height="8" fill="#c9ae88"/>
<path d="M17 64 Q16.7 54.5 16.0 45.0" stroke="#6a5638" stroke-width="1.3" fill="none"/><path d="M16.0 45.0 Q12.7 42.6 9.4 45.3" stroke="#4e4a2e" stroke-width="1.6" fill="none" stroke-linecap="round"/><path d="M16.0 45.0 Q14.1 41.5 12.1 43.5" stroke="#4e4a2e" stroke-width="1.6" fill="none" stroke-linecap="round"/><path d="M16.0 45.0 Q15.6 41.3 15.1 43.3" stroke="#4e4a2e" stroke-width="1.6" fill="none" stroke-linecap="round"/><path d="M16.0 45.0 Q17.5 41.2 19.0 43.0" stroke="#4e4a2e" stroke-width="1.6" fill="none" stroke-linecap="round"/><path d="M16.0 45.0 Q19.2 42.3 22.3 44.8" stroke="#4e4a2e" stroke-width="1.6" fill="none" stroke-linecap="round"/><path d="M16.0 45.0 Q18.5 44.2 20.9 47.9" stroke="#4e4a2e" stroke-width="1.6" fill="none" stroke-linecap="round"/><path d="M16.0 45.0 Q13.5 44.2 11.1 47.9" stroke="#4e4a2e" stroke-width="1.6" fill="none" stroke-linecap="round"/><path d="M21 64 Q21.6 56.0 23.0 48.0" stroke="#6a5638" stroke-width="1.3" fill="none"/><path d="M23.0 48.0 Q19.7 45.6 16.4 48.3" stroke="#4e4a2e" stroke-width="1.6" fill="none" stroke-linecap="round"/><path d="M23.0 48.0 Q21.1 44.5 19.1 46.5" stroke="#4e4a2e" stroke-width="1.6" fill="none" stroke-linecap="round"/><path d="M23.0 48.0 Q22.6 44.3 22.1 46.3" stroke="#4e4a2e" stroke-width="1.6" fill="none" stroke-linecap="round"/><path d="M23.0 48.0 Q24.5 44.2 26.0 46.0" stroke="#4e4a2e" stroke-width="1.6" fill="none" stroke-linecap="round"/><path d="M23.0 48.0 Q26.2 45.3 29.3 47.8" stroke="#4e4a2e" stroke-width="1.6" fill="none" stroke-linecap="round"/><path d="M23.0 48.0 Q25.5 47.2 27.9 50.9" stroke="#4e4a2e" stroke-width="1.6" fill="none" stroke-linecap="round"/><path d="M23.0 48.0 Q20.5 47.2 18.1 50.9" stroke="#4e4a2e" stroke-width="1.6" fill="none" stroke-linecap="round"/><path d="M24 65 Q24.3 60.5 25.0 56.0" stroke="#6a5638" stroke-width="1.3" fill="none"/><path d="M25.0 56.0 Q21.7 53.6 18.4 56.3" stroke="#4e4a2e" stroke-width="1.6" fill="none" stroke-linecap="round"/><path d="M25.0 56.0 Q23.1 52.5 21.1 54.5" stroke="#4e4a2e" stroke-width="1.6" fill="none" stroke-linecap="round"/><path d="M25.0 56.0 Q24.6 52.3 24.1 54.3" stroke="#4e4a2e" stroke-width="1.6" fill="none" stroke-linecap="round"/><path d="M25.0 56.0 Q26.5 52.2 28.0 54.0" stroke="#4e4a2e" stroke-width="1.6" fill="none" stroke-linecap="round"/><path d="M25.0 56.0 Q28.2 53.3 31.3 55.8" stroke="#4e4a2e" stroke-width="1.6" fill="none" stroke-linecap="round"/><path d="M25.0 56.0 Q27.5 55.2 29.9 58.9" stroke="#4e4a2e" stroke-width="1.6" fill="none" stroke-linecap="round"/><path d="M25.0 56.0 Q22.5 55.2 20.1 58.9" stroke="#4e4a2e" stroke-width="1.6" fill="none" stroke-linecap="round"/>
<path d="M37 63 Q36.7 53.5 36.0 44.0" stroke="#6a5638" stroke-width="1.3" fill="none"/><path d="M36.0 44.0 Q32.7 41.6 29.4 44.3" stroke="#4e4a2e" stroke-width="1.6" fill="none" stroke-linecap="round"/><path d="M36.0 44.0 Q34.1 40.5 32.1 42.5" stroke="#4e4a2e" stroke-width="1.6" fill="none" stroke-linecap="round"/><path d="M36.0 44.0 Q35.6 40.3 35.1 42.3" stroke="#4e4a2e" stroke-width="1.6" fill="none" stroke-linecap="round"/><path d="M36.0 44.0 Q37.5 40.2 39.0 42.0" stroke="#4e4a2e" stroke-width="1.6" fill="none" stroke-linecap="round"/><path d="M36.0 44.0 Q39.2 41.3 42.3 43.8" stroke="#4e4a2e" stroke-width="1.6" fill="none" stroke-linecap="round"/><path d="M36.0 44.0 Q38.5 43.2 40.9 46.9" stroke="#4e4a2e" stroke-width="1.6" fill="none" stroke-linecap="round"/><path d="M36.0 44.0 Q33.5 43.2 31.1 46.9" stroke="#4e4a2e" stroke-width="1.6" fill="none" stroke-linecap="round"/><path d="M41 63 Q41.6 54.5 43.0 46.0" stroke="#6a5638" stroke-width="1.3" fill="none"/><path d="M43.0 46.0 Q39.7 43.6 36.4 46.3" stroke="#4e4a2e" stroke-width="1.6" fill="none" stroke-linecap="round"/><path d="M43.0 46.0 Q41.1 42.5 39.1 44.5" stroke="#4e4a2e" stroke-width="1.6" fill="none" stroke-linecap="round"/><path d="M43.0 46.0 Q42.6 42.3 42.1 44.3" stroke="#4e4a2e" stroke-width="1.6" fill="none" stroke-linecap="round"/><path d="M43.0 46.0 Q44.5 42.2 46.0 44.0" stroke="#4e4a2e" stroke-width="1.6" fill="none" stroke-linecap="round"/><path d="M43.0 46.0 Q46.2 43.3 49.3 45.8" stroke="#4e4a2e" stroke-width="1.6" fill="none" stroke-linecap="round"/><path d="M43.0 46.0 Q45.5 45.2 47.9 48.9" stroke="#4e4a2e" stroke-width="1.6" fill="none" stroke-linecap="round"/><path d="M43.0 46.0 Q40.5 45.2 38.1 48.9" stroke="#4e4a2e" stroke-width="1.6" fill="none" stroke-linecap="round"/>
</svg></div>
<div class="tile" style="left:1701px;top:338px"><svg width="86" height="86" viewBox="0 0 86 86">
<defs><linearGradient id="nw" x1="0" y1="0" x2="1" y2="0"><stop offset="0" stop-color="#f3e3cd"/><stop offset="0.5" stop-color="#ede0d0"/><stop offset="0.62" stop-color="#d6d0ca"/><stop offset="0.82" stop-color="#c8c6c4"/><stop offset="0.84" stop-color="#e2dad2"/><stop offset="1" stop-color="#ddd4cc"/></linearGradient></defs>
<rect width="86" height="86" fill="url(#nw)"/>
<path d="M17 34 L43 35 L42 76 L17 76Z" fill="#e2cfb2"/><rect x="21" y="40" width="18" height="32" fill="#b9c0c2"/><path d="M23 60 l10 -6 l4 4 v10 h-14z" fill="#dfe4e6" opacity="0.7"/>
<rect x="12" y="74" width="57" height="12" fill="#eee8e0"/><rect x="12" y="74" width="57" height="2" fill="#f8f6f2"/>
<path d="M44 62 C41 66 41 78 44 82 H52 C55 78 55 66 52 62 Z" fill="#8fa3a1"/><rect x="45.5" y="58" width="5" height="5" fill="#8fa3a1"/>
<path d="M48 58 L46 47 M48 58 L51 46 M48 58 L49 50" stroke="#6d8a4a" stroke-width="1.1" fill="none"/>
<ellipse cx="45.5" cy="46" rx="2" ry="2.6" fill="#c8302a"/><ellipse cx="51.5" cy="45" rx="2.2" ry="2.8" fill="#e8a070"/><ellipse cx="49" cy="49" rx="1.8" ry="2.2" fill="#a83828"/>
</svg></div>
<div class="tile" style="left:1510px;top:464px"><svg width="86" height="86" viewBox="0 0 86 86">
<defs><linearGradient id="lw" x1="0" y1="0" x2="1" y2="0"><stop offset="0" stop-color="#909091"/><stop offset="0.35" stop-color="#a2a1a1"/><stop offset="0.7" stop-color="#a9a8a8"/><stop offset="1" stop-color="#9a9999"/></linearGradient></defs>
<rect width="86" height="86" fill="url(#lw)"/>
<path d="M38 16 C36 20 36 23 35 26 C36 28 37 28 38 29 C39 33 42 36 46 36 L50 42 L60 42 C57 36 56 30 56 24 C55 19 48 15 38 16Z" fill="#ead4c9"/>
<path d="M35 15 C34 6 42 1 51 1 C59 1 64 4 63 10 C62 15 58 19 57 26 C56 22 53 19 50 18 C46 16 40 15 35 15Z" fill="#17181b"/>
<path d="M38 86 C38 72 40 56 46 44 C50 40 58 38 64 40 C70 46 73 66 73 86 Z" fill="#f2f2f1"/>
<path d="M62 42 C68 50 71 66 70 86 L73 86 C73 66 70 46 64 40 Z" fill="#d6d7d8"/>
<path d="M24 56 C27 52 33 52 37 55 L42 61 C41 67 36 71 30 71 C26 70 24 64 24 60Z" fill="#e6cbbd"/>
<path d="M26 60 L34 55 M27 65 L36 59" stroke="#c9a898" stroke-width="0.8"/>
<path d="M32 80 h14 v6 h-14z" fill="#e6e0d6"/>
</svg></div>
<div class="tile" style="left:1605px;top:464px"><svg width="86" height="86" viewBox="0 0 86 86">
<defs><linearGradient id="sky5" x1="0" y1="0" x2="0" y2="1"><stop offset="0" stop-color="#d3dadd"/><stop offset="1" stop-color="#dfe2e2"/></linearGradient>
<linearGradient id="sand5" x1="0" y1="0" x2="0" y2="1"><stop offset="0" stop-color="#eadbbd"/><stop offset="1" stop-color="#e0caa4"/></linearGradient></defs>
<rect width="86" height="86" fill="url(#sky5)"/>
<rect y="51" width="86" height="35" fill="url(#sand5)"/>
<ellipse cx="24" cy="66" rx="15" ry="2.5" fill="#b89a70" opacity="0.45"/><ellipse cx="44" cy="65" rx="11" ry="2" fill="#b89a70" opacity="0.35"/>
<rect x="63" y="49" width="9" height="8" fill="#f3ede4"/><rect x="71" y="51" width="15" height="7" fill="#d6bb98"/><rect x="65" y="52" width="2.5" height="3" fill="#b8a080"/>
<rect x="31" y="53" width="6" height="6" fill="#efe6d8" opacity="0.8"/><rect x="47" y="54" width="5" height="8" fill="#c9ae88"/>
<path d="M17 65 Q16.7 55.5 16.0 46.0" stroke="#6a5638" stroke-width="1.3" fill="none"/><path d="M16.0 46.0 Q12.7 43.6 9.4 46.3" stroke="#5a5834" stroke-width="1.6" fill="none" stroke-linecap="round"/><path d="M16.0 46.0 Q14.1 42.5 12.1 44.5" stroke="#5a5834" stroke-width="1.6" fill="none" stroke-linecap="round"/><path d="M16.0 46.0 Q15.6 42.3 15.1 44.3" stroke="#5a5834" stroke-width="1.6" fill="none" stroke-linecap="round"/><path d="M16.0 46.0 Q17.5 42.2 19.0 44.0" stroke="#5a5834" stroke-width="1.6" fill="none" stroke-linecap="round"/><path d="M16.0 46.0 Q19.2 43.3 22.3 45.8" stroke="#5a5834" stroke-width="1.6" fill="none" stroke-linecap="round"/><path d="M16.0 46.0 Q18.5 45.2 20.9 48.9" stroke="#5a5834" stroke-width="1.6" fill="none" stroke-linecap="round"/><path d="M16.0 46.0 Q13.5 45.2 11.1 48.9" stroke="#5a5834" stroke-width="1.6" fill="none" stroke-linecap="round"/><path d="M21 65 Q21.6 57.0 23.0 49.0" stroke="#6a5638" stroke-width="1.3" fill="none"/><path d="M23.0 49.0 Q19.7 46.6 16.4 49.3" stroke="#5a5834" stroke-width="1.6" fill="none" stroke-linecap="round"/><path d="M23.0 49.0 Q21.1 45.5 19.1 47.5" stroke="#5a5834" stroke-width="1.6" fill="none" stroke-linecap="round"/><path d="M23.0 49.0 Q22.6 45.3 22.1 47.3" stroke="#5a5834" stroke-width="1.6" fill="none" stroke-linecap="round"/><path d="M23.0 49.0 Q24.5 45.2 26.0 47.0" stroke="#5a5834" stroke-width="1.6" fill="none" stroke-linecap="round"/><path d="M23.0 49.0 Q26.2 46.3 29.3 48.8" stroke="#5a5834" stroke-width="1.6" fill="none" stroke-linecap="round"/><path d="M23.0 49.0 Q25.5 48.2 27.9 51.9" stroke="#5a5834" stroke-width="1.6" fill="none" stroke-linecap="round"/><path d="M23.0 49.0 Q20.5 48.2 18.1 51.9" stroke="#5a5834" stroke-width="1.6" fill="none" stroke-linecap="round"/><path d="M24 66 Q24.3 61.5 25.0 57.0" stroke="#6a5638" stroke-width="1.3" fill="none"/><path d="M25.0 57.0 Q21.7 54.6 18.4 57.3" stroke="#5a5834" stroke-width="1.6" fill="none" stroke-linecap="round"/><path d="M25.0 57.0 Q23.1 53.5 21.1 55.5" stroke="#5a5834" stroke-width="1.6" fill="none" stroke-linecap="round"/><path d="M25.0 57.0 Q24.6 53.3 24.1 55.3" stroke="#5a5834" stroke-width="1.6" fill="none" stroke-linecap="round"/><path d="M25.0 57.0 Q26.5 53.2 28.0 55.0" stroke="#5a5834" stroke-width="1.6" fill="none" stroke-linecap="round"/><path d="M25.0 57.0 Q28.2 54.3 31.3 56.8" stroke="#5a5834" stroke-width="1.6" fill="none" stroke-linecap="round"/><path d="M25.0 57.0 Q27.5 56.2 29.9 59.9" stroke="#5a5834" stroke-width="1.6" fill="none" stroke-linecap="round"/><path d="M25.0 57.0 Q22.5 56.2 20.1 59.9" stroke="#5a5834" stroke-width="1.6" fill="none" stroke-linecap="round"/>
<path d="M37 64 Q36.7 54.5 36.0 45.0" stroke="#6a5638" stroke-width="1.3" fill="none"/><path d="M36.0 45.0 Q32.7 42.6 29.4 45.3" stroke="#5a5834" stroke-width="1.6" fill="none" stroke-linecap="round"/><path d="M36.0 45.0 Q34.1 41.5 32.1 43.5" stroke="#5a5834" stroke-width="1.6" fill="none" stroke-linecap="round"/><path d="M36.0 45.0 Q35.6 41.3 35.1 43.3" stroke="#5a5834" stroke-width="1.6" fill="none" stroke-linecap="round"/><path d="M36.0 45.0 Q37.5 41.2 39.0 43.0" stroke="#5a5834" stroke-width="1.6" fill="none" stroke-linecap="round"/><path d="M36.0 45.0 Q39.2 42.3 42.3 44.8" stroke="#5a5834" stroke-width="1.6" fill="none" stroke-linecap="round"/><path d="M36.0 45.0 Q38.5 44.2 40.9 47.9" stroke="#5a5834" stroke-width="1.6" fill="none" stroke-linecap="round"/><path d="M36.0 45.0 Q33.5 44.2 31.1 47.9" stroke="#5a5834" stroke-width="1.6" fill="none" stroke-linecap="round"/><path d="M41 64 Q41.6 55.5 43.0 47.0" stroke="#6a5638" stroke-width="1.3" fill="none"/><path d="M43.0 47.0 Q39.7 44.6 36.4 47.3" stroke="#5a5834" stroke-width="1.6" fill="none" stroke-linecap="round"/><path d="M43.0 47.0 Q41.1 43.5 39.1 45.5" stroke="#5a5834" stroke-width="1.6" fill="none" stroke-linecap="round"/><path d="M43.0 47.0 Q42.6 43.3 42.1 45.3" stroke="#5a5834" stroke-width="1.6" fill="none" stroke-linecap="round"/><path d="M43.0 47.0 Q44.5 43.2 46.0 45.0" stroke="#5a5834" stroke-width="1.6" fill="none" stroke-linecap="round"/><path d="M43.0 47.0 Q46.2 44.3 49.3 46.8" stroke="#5a5834" stroke-width="1.6" fill="none" stroke-linecap="round"/><path d="M43.0 47.0 Q45.5 46.2 47.9 49.9" stroke="#5a5834" stroke-width="1.6" fill="none" stroke-linecap="round"/><path d="M43.0 47.0 Q40.5 46.2 38.1 49.9" stroke="#5a5834" stroke-width="1.6" fill="none" stroke-linecap="round"/>
</svg></div>
<div class="tile" style="left:1510px;top:652px"><svg width="86" height="86" viewBox="0 0 86 86">
<defs><linearGradient id="cb6" x1="0" y1="0" x2="0" y2="1"><stop offset="0" stop-color="#e2d2c2"/><stop offset="1" stop-color="#e9dccd"/></linearGradient>
<linearGradient id="sp6" x1="0" y1="0" x2="1" y2="0"><stop offset="0" stop-color="#e6b42a"/><stop offset="0.5" stop-color="#f4c634"/><stop offset="1" stop-color="#e6b42a"/></linearGradient></defs>
<rect width="86" height="86" fill="url(#cb6)"/>
<path d="M0 42 C30 40 60 40 86 44 V86 H0Z" fill="#f1e9df"/>
<path d="M0 50 C10 54 16 62 18 72 L0 74Z" fill="#000" opacity="0.05"/>
<path d="M11 64 H70 L74 73 H12 Z" fill="#ede4d6"/><path d="M11 73 H74 V75 H11Z" fill="#d9cdbc"/>
<path d="M21 36 C21 32 63 32 63 36 V64 C63 68 21 68 21 64Z" fill="url(#sp6)"/>
<path d="M20 34 C20 28 64 28 64 34 V44 C61 46 60 42 57 45 C56 48 54 46 53 44 C50 47 49 44 45 46 L40 50 C36 52 36 44 32 46 C30 48 28 68 26 66 C24 64 24 50 22 46 Z" fill="#f6f2e8"/>
<circle cx="30" cy="28" r="3" fill="#f07c2a"/><circle cx="35" cy="25" r="2.6" fill="#55873a"/><circle cx="38" cy="28" r="2.4" fill="#6aa040"/><circle cx="33" cy="24" r="1.8" fill="#a0a0a4"/>
</svg></div>
<div class="tile" style="left:1605px;top:652px"><svg width="86" height="86" viewBox="0 0 86 86">
<defs><linearGradient id="cb7" x1="0" y1="0" x2="0" y2="1"><stop offset="0" stop-color="#d6c7bd"/><stop offset="1" stop-color="#ddd0c6"/></linearGradient>
<linearGradient id="sp7" x1="0" y1="0" x2="1" y2="0"><stop offset="0" stop-color="#d2aa5c"/><stop offset="0.5" stop-color="#e0bc6e"/><stop offset="1" stop-color="#d2aa5c"/></linearGradient></defs>
<rect width="86" height="86" fill="url(#cb7)"/>
<path d="M0 42 C30 40 60 40 86 44 V86 H0Z" fill="#ebe2da"/>
<path d="M0 50 C10 54 16 62 18 72 L0 74Z" fill="#000" opacity="0.05"/>
<path d="M11 64 H70 L74 73 H12 Z" fill="#ede4d6"/><path d="M11 73 H74 V75 H11Z" fill="#d9cdbc"/>
<path d="M21 36 C21 32 63 32 63 36 V64 C63 68 21 68 21 64Z" fill="url(#sp7)"/>
<path d="M20 34 C20 28 64 28 64 34 V44 C61 46 60 42 57 45 C56 48 54 46 53 44 C50 47 49 44 45 46 L40 50 C36 52 36 44 32 46 C30 48 28 68 26 66 C24 64 24 50 22 46 Z" fill="#f6f2e8"/>
<circle cx="30" cy="28" r="3" fill="#f07c2a"/><circle cx="35" cy="25" r="2.6" fill="#55873a"/><circle cx="38" cy="28" r="2.4" fill="#6aa040"/><circle cx="33" cy="24" r="1.8" fill="#a0a0a4"/>
</svg></div>
<div class="tile" style="left:1701px;top:652px"><svg width="86" height="86" viewBox="0 0 86 86">
<rect width="86" height="86" fill="#ebebea"/>
<path d="M0 50 C8 40 30 38 50 38 C70 38 84 44 86 50 V86 H0Z" fill="#6e9058"/>
<path d="M0 70 C10 80 20 86 30 86 H0Z" fill="#5c7e48"/>
<ellipse cx="43" cy="58" rx="31" ry="17" transform="rotate(-8 43 58)" fill="#fbfbfa"/>
<ellipse cx="43" cy="60" rx="31" ry="16" transform="rotate(-8 43 60)" fill="none" stroke="#d8dcd6" stroke-width="0.8"/>
<rect x="34" y="42" width="23" height="21" rx="8" fill="#f1c64c"/><ellipse cx="45.5" cy="43" rx="11.5" ry="5" fill="#eab43c"/>
<path d="M35 50 H57 M35 56 H57" stroke="#e0ae3c" stroke-width="0.8"/>
<path d="M20 66 L26 60" stroke="#4a5a38" stroke-width="1.6"/><circle cx="25" cy="61" r="1.8" fill="#2c2e4a"/><circle cx="27" cy="62" r="1.5" fill="#f0e6a0"/>
</svg></div>
<div class="tlab" style="left:1505px;top:431px">Apricot</div>
<div class="tlab" style="left:1600px;top:431px">Coconut</div>
<div class="tlab" style="left:1696px;top:431px">Natural</div>
<div class="tlab" style="left:1505px;top:557px">Light</div>
<div class="tlab" style="left:1600px;top:557px">Walnut</div>
<div class="a" style="left:1510px;top:600px;width:278px;height:1px;background:#e9ecef"></div>
<div class="tl" style="left:1510px;top:619px;color:#16181b;font-size:16px;font-weight:bold;text-align:left">Delicacy</div>
<div class="tlab" style="left:1505px;top:745px">Miso</div>
<div class="tlab" style="left:1600px;top:745px">Charcoal fir...</div>
<div class="tlab" style="left:1696px;top:745px">Snack</div>
<div class="a" style="left:1510px;top:788px;width:278px;height:1px;background:#e9ecef"></div>

<!-- ============ TOOL STRIP ============ -->
<div class="a" style="left:1806px;top:89px;width:84px;height:715px;background:#eef1f4"></div>
<div class="a" style="left:1814px;top:98px;width:66px;height:493px;border-radius:14px;background:linear-gradient(90deg,#f8f9fa,#f2f4f6);border:1px solid #fff;box-shadow:0 0 10px 2px rgba(60,70,80,0.07)"></div>
<div class="a" style="left:1818px;top:102px;width:57px;height:62px;border-radius:9px;background:#e0e4e8"></div>
<div class="a" style="left:1883px;top:231px;width:6px;height:304px;border-radius:3px;background:#c4c8cc"></div>
<svg class="a" style="left:1837px;top:113px" width="20" height="19" viewBox="0 0 20 19" fill="none" stroke="#2a2e33" stroke-width="1.6" stroke-linecap="round" stroke-linejoin="round" stroke-width="2.1"><circle cx="10" cy="5.8" r="4.6"/><circle cx="5.8" cy="13" r="4.6"/><circle cx="14.2" cy="13" r="4.6"/></svg>
<div class="tool" style="top:139px;color:#2a2e33">Filters</div>
<svg class="a" style="left:1837px;top:180px" width="19" height="19" viewBox="0 0 19 19" fill="none" stroke="#50565d" stroke-width="1.6" stroke-linecap="round" stroke-linejoin="round"><path d="M6.84 1.17 L10.05 5.53 L15.43 5.00 L12.28 9.40 L14.45 14.35 L9.29 12.72 L5.25 16.31 L5.21 10.90 L0.54 8.16 L5.68 6.46Z"/><path d="M12.3 12.6 L16.6 17.6"/></svg>
<div class="tool" style="top:206px">Effects</div>
<svg class="a" style="left:1836px;top:245px" width="20" height="20" viewBox="0 0 20 20" fill="none" stroke="#50565d" stroke-width="1.6" stroke-linecap="round" stroke-linejoin="round"><path d="M3 13 A8 8 0 0 1 11 2" stroke-dasharray="0.1 2.6" stroke-width="1.8"/><path d="M15.6 3.2 L17.2 4.8 C17.7 5.3 17.7 6 17.2 6.5 L8.2 15.5 C7.7 16 7 16 6.5 15.5 L4.9 13.9 C4.4 13.4 4.4 12.7 4.9 12.2 L13.9 3.2 C14.4 2.7 15.1 2.7 15.6 3.2Z M7 10.2 L10 13.2"/><path d="M16.5 14.5 Q16.8 16.6 18.8 16.9 Q16.8 17.2 16.5 19.3 Q16.2 17.2 14.2 16.9 Q16.2 16.6 16.5 14.5Z" fill="#50565d" stroke-width="0.6"/></svg>
<div class="tool" style="top:273px">Remove<br>backgr...</div>
<svg class="a" style="left:1837px;top:326px" width="20" height="19" viewBox="0 0 20 19" fill="none" stroke="#50565d" stroke-width="1.6" stroke-linecap="round" stroke-linejoin="round"><path d="M1 5 H8 M13 5 H19 M1 14 H4 M9 14 H19"/><circle cx="10.5" cy="5" r="2.5"/><circle cx="6.5" cy="14" r="2.5"/></svg>
<div class="tool" style="top:352px">Adjust</div>
<svg class="a" style="left:1837px;top:392px" width="19" height="19" viewBox="0 0 19 19" fill="none" stroke="#50565d" stroke-width="1.6" stroke-linecap="round" stroke-linejoin="round"><path d="M2 17.5 L12.5 7 M10.5 9 L12.5 11"/><path d="M14.5 1 v4 M12.5 3 h4 M4 2.5 v3.5 M2.2 4.2 h3.6 M16 10 v3 M14.5 11.5 h3" stroke-width="1.3"/></svg>
<div class="tool" style="top:419px">Smart<br>tools</div>
<svg class="a" style="left:1838px;top:471px" width="17" height="20" viewBox="0 0 17 20" fill="none" stroke="#50565d" stroke-width="1.6" stroke-linecap="round" stroke-linejoin="round"><path d="M8.5 1.5 C12 6 15 9 15 12.5 C15 16 12.2 18.8 8.5 18.8 C4.8 18.8 2 16 2 12.5 C2 9 5 6 8.5 1.5Z"/><path d="M8.5 7 V17 C6 17 4.5 15 4.5 12.8 C4.5 11 6 9 8.5 7Z" fill="#50565d" stroke="none"/></svg>
<div class="tool" style="top:497px">Opacity</div>
<svg class="a" style="left:1837px;top:536px" width="20" height="20" viewBox="0 0 20 20" fill="none" stroke="#50565d" stroke-width="1.6" stroke-linecap="round" stroke-linejoin="round"><path d="M1 5 V2.5 C1 1.7 1.7 1 2.5 1 H5 M8.5 1 H11.5 M15 1 H17.5 C18.3 1 19 1.7 19 2.5 V5 M19 8.5 V11.5 M19 15 V17.5 C19 18.3 18.3 19 17.5 19 H15 M11.5 19 H8.5 M5 19 H2.5 C1.7 19 1 18.3 1 17.5 V15 M1 11.5 V8.5"/><rect x="6" y="6" width="8" height="8" rx="1.5"/></svg>
<div class="tool" style="top:563px">Arrange</div>


<!-- ============ LAYERS PANEL ============ -->
<div class="a" style="left:1890px;top:64px;width:113px;height:740px;background:#fdfdfe"></div>
<div class="a" style="left:1889px;top:64px;width:1px;height:740px;background:#e6e9ec"></div>
<div class="tl" style="left:1909px;top:78px;color:#111;font-size:15.5px;font-weight:bold;text-align:left">Layers</div>
<div class="a" style="left:1909px;top:110px;width:77px;height:66px;border-radius:9px;border:2.5px solid #00c4de;background:#fff"></div><div class="a" style="left:1913px;top:114px;width:69px;height:58px;border-radius:5px;border:3px dashed #e2e5e8"></div>
<svg class="a" style="left:1917px;top:117px" width="61" height="52"><rect width="61" height="52" fill="#40464e"/><use href="#logo" width="61" height="52.2" preserveAspectRatio="none"/></svg>
<div class="a" style="left:1909px;top:185px;width:77px;height:66px;border-radius:9px;border:4px solid #e8edf0;background:#fff"></div><div class="a" style="left:1913px;top:189px;width:69px;height:58px;border-radius:6px;border:1px dashed #e3e6e9"></div>
<div class="a" style="left:1958px;top:223px;width:24px;height:24px;border-radius:5px;background:#8b8f94"></div><svg class="a" style="left:1963px;top:228px" width="14" height="14" viewBox="0 0 14 14" fill="none" stroke="#e6e8ea" stroke-width="1.3"><rect x="0.7" y="0.7" width="12.6" height="12.6" rx="1.5"/><path d="M0.7 7 L7 0.7 M0.7 12 L12 0.7 M5 13.3 L13.3 5"/></svg>

<!-- ============ BOTTOM BAR ============ -->
<div class="a" style="left:469px;top:804px;width:1534px;height:49px;background:#fdfdfe"></div>
<div class="a" style="left:469px;top:804px;width:1534px;height:1px;background:#eceef1"></div>

<div class="a" style="left:1440px;top:804px;width:420px;height:50px;background:radial-gradient(ellipse 50% 90% at 50% 0%,rgba(60,70,80,0.07),rgba(60,70,80,0) 100%)"></div>
<svg class="a" style="left:488px;top:823px" width="18" height="18" viewBox="0 0 18 18" fill="none" stroke="#1d1f22" stroke-width="1.8" stroke-linecap="round" stroke-linejoin="round"><path d="M5 4 V2.8 C5 1.8 5.8 1 6.8 1 H15.2 C16.2 1 17 1.8 17 2.8 V11.2 C17 12.2 16.2 13 15.2 13 H14"/><rect x="1" y="4.5" width="12.5" height="12.5" rx="1.8"/><path d="M7.2 7.8 V13.8 M4.2 10.8 H10.2"/></svg>
<svg class="a" style="left:535px;top:823px" width="19" height="18" viewBox="0 0 19 18" fill="none" stroke="#cfd4d9" stroke-width="1.8" stroke-linecap="round" stroke-linejoin="round"><path d="M1 4 H18 M6.5 4 V2 C6.5 1.4 7 1 7.5 1 H11.5 C12 1 12.5 1.4 12.5 2 V4 M3 4 L4.2 16 C4.3 16.6 4.8 17 5.3 17 H13.7 C14.2 17 14.7 16.6 14.8 16 L16 4"/></svg>
<div class="a" style="left:572px;top:823px;width:1px;height:19px;background:#dfe3e7"></div>
<svg class="a" style="left:594px;top:823px" width="20" height="20" viewBox="0 0 20 20" fill="none" stroke="#1d1f22" stroke-width="1.8" stroke-linecap="round" stroke-linejoin="round"><path d="M17 10 V3 C17 1.9 16.1 1 15 1 H3 C1.9 1 1 1.9 1 3 V15 C1 16.1 1.9 17 3 17 H10"/><path d="M15.5 13 V19 M12.5 16 H18.5"/></svg>
<div class="tl" style="left:621px;top:823px;color:#1d1f22;font-size:16px;font-weight:bold;text-align:left">Add page</div>
<svg class="a" style="left:1823px;top:825px" width="9" height="15" viewBox="0 0 9 15" fill="none" stroke="#bfc5cb" stroke-width="1.5" stroke-linecap="round" stroke-linejoin="round"><path d="M8 1 L1.5 7.5 L8 14"/></svg>
<div class="tl" style="left:1862px;top:824px;color:#1d1f22;font-size:15px;font-weight:bold;text-align:left;letter-spacing:-0.6px">1/1</div>
<svg class="a" style="left:1910px;top:825px" width="9" height="15" viewBox="0 0 9 15" fill="none" stroke="#bfc5cb" stroke-width="1.5" stroke-linecap="round" stroke-linejoin="round"><path d="M1 1 L7.5 7.5 L1 14"/></svg>
<div class="a" style="left:1947px;top:823px;width:1px;height:18px;background:#dfe3e7"></div>
<svg class="a" style="left:1967px;top:823px" width="18" height="18" viewBox="0 0 18 18" fill="none" stroke="#1d1f22" stroke-width="1.8" stroke-linecap="round" stroke-linejoin="round"><rect x="1" y="7.5" width="16" height="9.5" rx="1.5"/><path d="M6.5 3.5 L9 1.2 L11.5 3.5"/></svg>
<!-- red highlight box left -->
<div class="a" style="left:0;top:51px;width:100px;height:718px;border:6px solid #fe0000"></div>
<!-- red box right -->
<div class="a" style="left:1800px;top:84px;width:100px;height:526px;border:6px solid #fe0000"></div>
</div>
</body></html>
